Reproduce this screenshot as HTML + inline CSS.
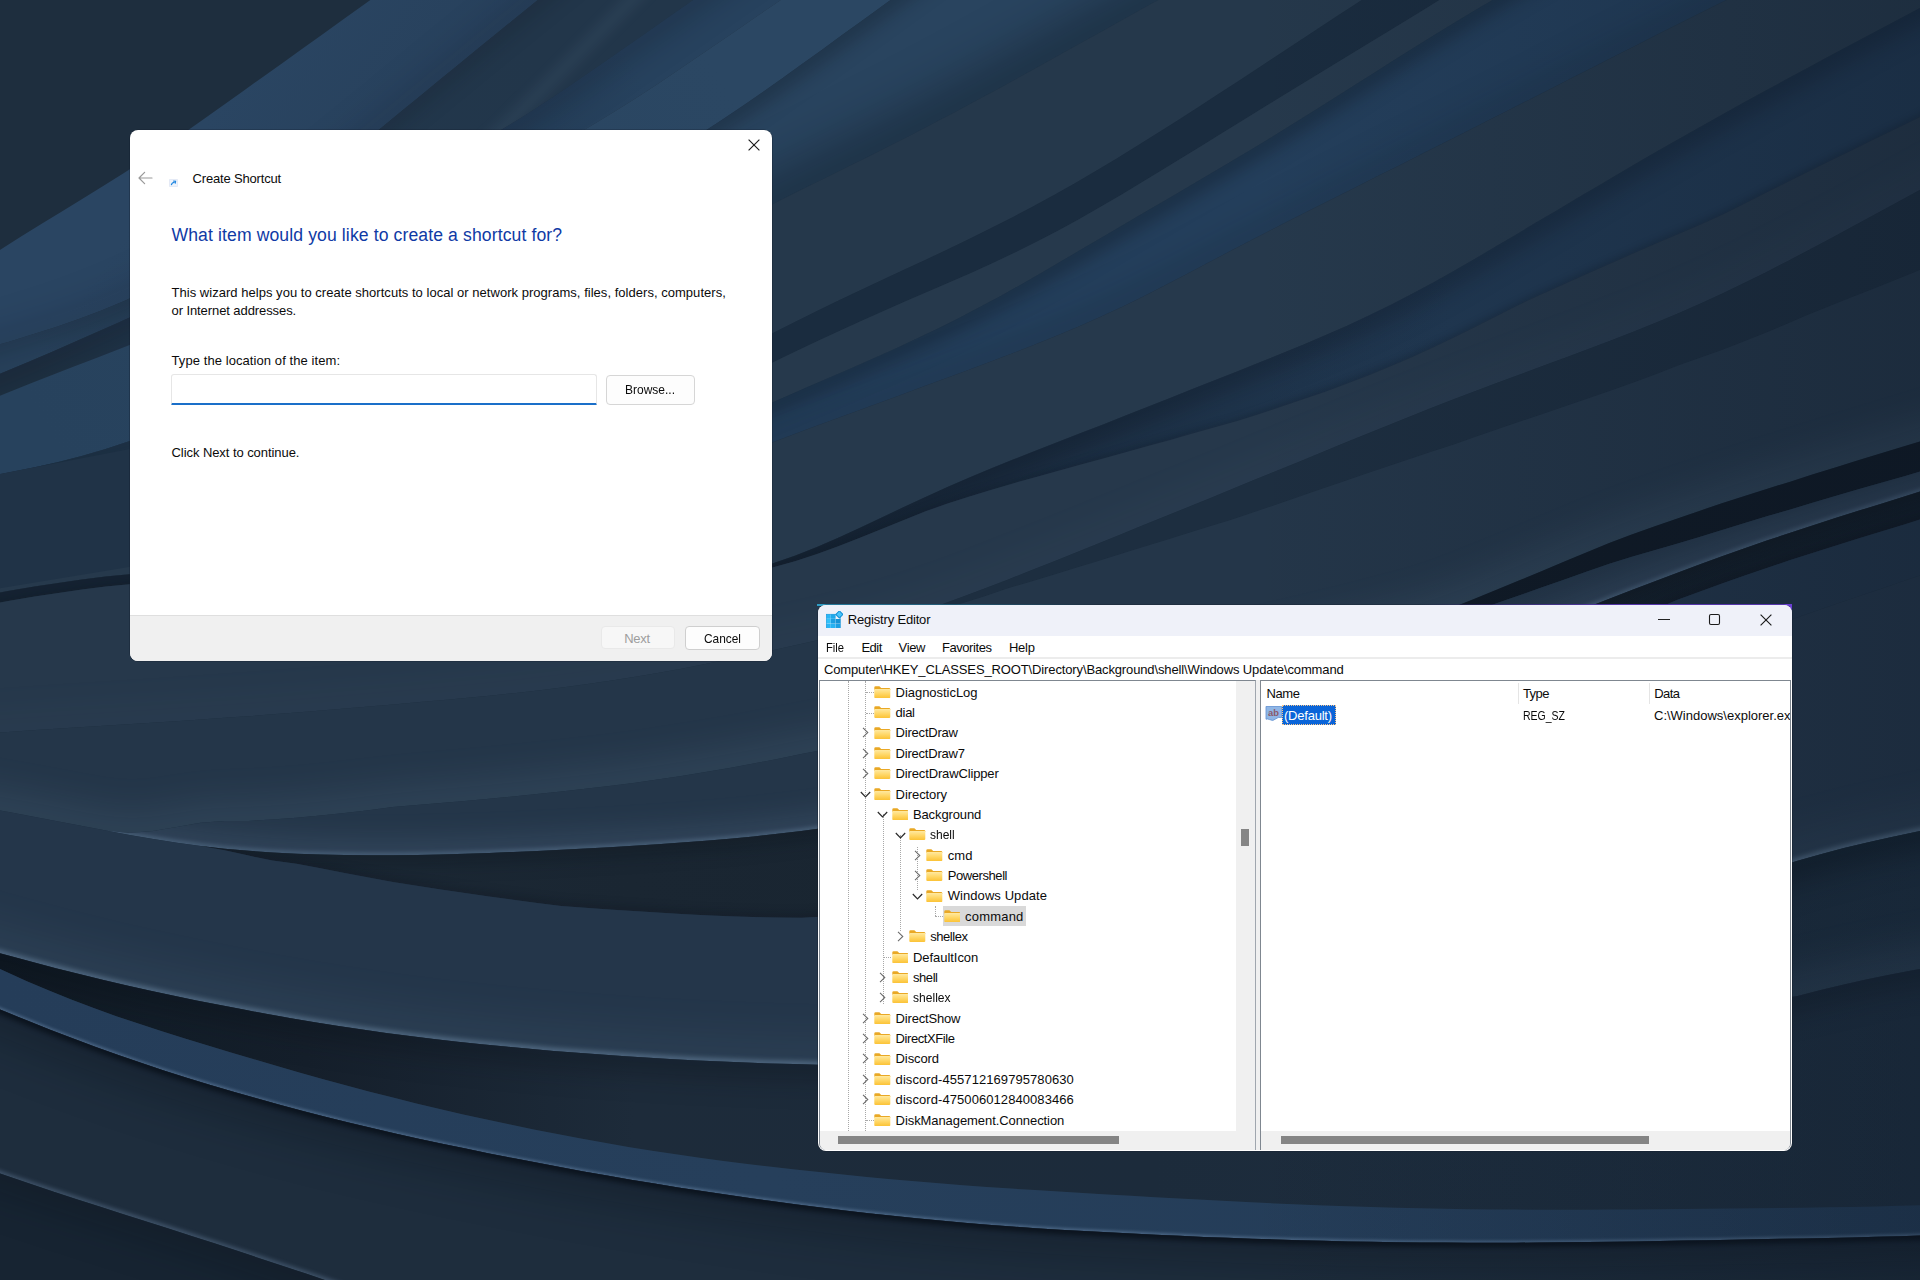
<!DOCTYPE html>
<html lang="en"><head><meta charset="utf-8"><title>Create Shortcut / Registry Editor</title>
<style>
html,body{margin:0;padding:0}
body{width:1920px;height:1280px;overflow:hidden;position:relative;background:#22354a;font-family:"Liberation Sans",sans-serif}
.b{position:absolute;display:block}
.t{position:absolute;white-space:pre;line-height:20px;font-family:"Liberation Sans",sans-serif}
</style></head><body>
<svg class="b" style="left:0;top:0" width="1920" height="1280" viewBox="0 0 1920 1280"><defs><linearGradient id="g_A" gradientUnits="userSpaceOnUse" x1="150" y1="200" x2="330" y2="330"><stop offset="0" stop-color="#2a4562"/><stop offset="1" stop-color="#27405b"/></linearGradient><path id="b_A" d="M-60.0 290.0L-40.0 276.4L-19.9 263.0L0.3 249.7L20.7 236.8L41.3 224.0L61.9 211.4L82.6 198.8L103.2 186.1L123.6 173.2L143.9 160.1L164.1 146.7L184.0 133.0L203.9 119.1L223.6 105.1L243.3 91.0L262.9 76.9L282.6 62.9L302.3 48.8L322.0 34.7L341.7 20.6L361.3 6.5L381.0 -7.6L400.7 -21.8L420.3 -35.9L440.0 -50.0 L600.0 -50.0 L590.5 -42.4L571.6 -27.3L552.7 -12.1L533.8 3.2L515.0 18.5L496.2 33.8L477.4 49.1L458.6 64.5L439.8 79.8L421.1 95.2L402.3 110.6L383.5 126.0L364.7 141.3L345.9 156.5L327.0 171.7L307.9 186.7L288.6 201.4L269.1 215.7L249.4 229.7L229.3 243.2L208.9 256.2L188.2 268.6L167.1 280.2L145.5 291.1L123.6 301.2L101.4 310.5L78.8 319.0L56.0 326.9L32.9 334.3L9.8 341.4L-13.5 348.3L-36.7 355.2L-60.0 362.0 Z"/><clipPath id="cp_A"><use href="#b_A"/></clipPath><linearGradient id="g_B" gradientUnits="userSpaceOnUse" x1="40" y1="350" x2="520" y2="40"><stop offset="0" stop-color="#27405a"/><stop offset="0.35" stop-color="#22384e"/><stop offset="1" stop-color="#22364a"/></linearGradient><path id="b_B" d="M-60.0 362.0L-36.7 355.2L-13.5 348.3L9.8 341.4L32.9 334.3L56.0 326.9L78.8 319.0L101.4 310.5L123.6 301.2L145.5 291.1L167.1 280.2L188.2 268.6L208.9 256.2L229.3 243.2L249.4 229.7L269.1 215.7L288.6 201.4L307.9 186.7L327.0 171.7L345.9 156.5L364.7 141.3L383.5 126.0L402.3 110.6L421.1 95.2L439.8 79.8L458.6 64.5L477.4 49.1L496.2 33.8L515.0 18.5L533.8 3.2L552.7 -12.1L571.6 -27.3L590.5 -42.4L600.0 -50.0 L765.0 -50.0 L745.2 -36.2L725.3 -22.4L705.5 -8.6L685.7 5.2L665.9 19.0L646.1 32.9L626.3 46.7L606.5 60.6L586.6 74.3L566.7 87.9L546.7 101.3L526.4 114.4L506.0 127.1L485.3 139.5L464.4 151.5L443.3 163.2L422.0 174.7L400.7 186.0L379.3 197.1L357.8 208.2L336.3 219.2L314.7 230.0L293.0 240.7L271.3 251.4L249.6 261.9L227.7 272.2L205.9 282.5L183.9 292.7L162.0 302.8L140.0 312.8L118.0 322.7L95.9 332.6L73.8 342.3L51.7 352.0L29.4 361.5L7.2 370.8L-15.2 380.0L-37.6 389.0L-60.0 398.0 Z"/><clipPath id="cp_B"><use href="#b_B"/></clipPath><linearGradient id="g_C" gradientUnits="userSpaceOnUse" x1="40" y1="380" x2="620" y2="40"><stop offset="0" stop-color="#1f3143"/><stop offset="0.35" stop-color="#1f354d"/><stop offset="1" stop-color="#27425e"/></linearGradient><path id="b_C" d="M-60.0 398.0L-37.6 389.0L-15.2 380.0L7.2 370.8L29.4 361.5L51.7 352.0L73.8 342.3L95.9 332.6L118.0 322.7L140.0 312.8L162.0 302.8L183.9 292.7L205.9 282.5L227.7 272.2L249.6 261.9L271.3 251.4L293.0 240.7L314.7 230.0L336.3 219.2L357.8 208.2L379.3 197.1L400.7 186.0L422.0 174.7L443.3 163.2L464.4 151.5L485.3 139.5L506.0 127.1L526.4 114.4L546.7 101.3L566.7 87.9L586.6 74.3L606.5 60.6L626.3 46.7L646.1 32.9L665.9 19.0L685.7 5.2L705.5 -8.6L725.3 -22.4L745.2 -36.2L765.0 -50.0 L855.0 -50.0 L835.0 -36.6L815.1 -23.2L795.2 -9.8L775.3 3.7L755.5 17.3L735.7 30.9L715.9 44.5L696.0 58.0L676.2 71.5L656.2 84.9L636.2 98.0L615.9 110.8L595.4 123.3L574.8 135.6L554.0 147.5L533.0 159.2L511.9 170.8L490.8 182.2L469.6 193.5L448.3 204.6L427.0 215.7L405.6 226.6L384.2 237.4L362.6 248.0L340.9 258.3L319.1 268.4L297.2 278.1L275.1 287.6L253.0 296.9L230.7 305.9L208.4 314.7L186.0 323.4L163.6 332.0L141.1 340.6L118.7 349.2L96.3 357.9L73.9 366.6L51.5 375.3L29.1 384.1L6.8 393.0L-15.5 401.9L-37.7 410.9L-60.0 420.0 Z"/><clipPath id="cp_C"><use href="#b_C"/></clipPath><linearGradient id="g_Dp" gradientUnits="userSpaceOnUse" x1="40" y1="420" x2="700" y2="40"><stop offset="0" stop-color="#27425d"/><stop offset="1" stop-color="#2b4763"/></linearGradient><path id="b_Dp" d="M-60.0 420.0L-37.7 410.9L-15.5 401.9L6.8 393.0L29.1 384.1L51.5 375.3L73.9 366.6L96.3 357.9L118.7 349.2L141.1 340.6L163.6 332.0L186.0 323.4L208.4 314.7L230.7 305.9L253.0 296.9L275.1 287.6L297.2 278.1L319.1 268.4L340.9 258.3L362.6 248.0L384.2 237.4L405.6 226.6L427.0 215.7L448.3 204.6L469.6 193.5L490.8 182.2L511.9 170.8L533.0 159.2L554.0 147.5L574.8 135.6L595.4 123.3L615.9 110.8L636.2 98.0L656.2 84.9L676.2 71.5L696.0 58.0L715.9 44.5L735.7 30.9L755.5 17.3L775.3 3.7L795.2 -9.8L815.1 -23.2L835.0 -36.6L855.0 -50.0 L960.0 -50.0 L940.3 -35.9L920.6 -21.7L901.0 -7.5L881.3 6.7L861.7 20.9L842.1 35.1L822.5 49.4L802.8 63.6L783.1 77.7L763.3 91.7L743.4 105.5L723.3 119.0L703.1 132.3L682.6 145.2L662.0 158.0L641.3 170.5L620.4 182.9L599.5 195.2L578.6 207.4L557.6 219.5L536.6 231.6L515.6 243.7L494.6 255.8L473.5 267.7L452.4 279.6L431.2 291.4L410.0 303.2L388.7 314.8L367.4 326.3L346.0 337.8L324.6 349.1L303.2 360.4L281.7 371.6L260.1 382.6L238.4 393.5L216.7 404.1L194.7 414.3L172.6 424.1L150.3 433.2L127.7 441.7L104.9 449.2L81.8 455.9L58.4 461.9L34.9 467.2L11.3 472.1L-12.5 476.8L-36.2 481.4L-60.0 486.0 Z"/><path id="b_ea" d="M-60.0 486.0L-36.2 481.4L-12.5 476.8L11.3 472.1L34.9 467.2L58.4 461.9L81.8 455.9L104.9 449.2L127.7 441.7L150.3 433.2L172.6 424.1L194.7 414.3L216.7 404.1L238.4 393.5L260.1 382.6L281.7 371.6L303.2 360.4L324.6 349.1L346.0 337.8L367.4 326.3L388.7 314.8L410.0 303.2L431.2 291.4L452.4 279.6L473.5 267.7L494.6 255.8L515.6 243.7L536.6 231.6L557.6 219.5L578.6 207.4L599.5 195.2L620.4 182.9L641.3 170.5L662.0 158.0L682.6 145.2L703.1 132.3L723.3 119.0L743.4 105.5L763.3 91.7L783.1 77.7L802.8 63.6L822.5 49.4L842.1 35.1L861.7 20.9L881.3 6.7L901.0 -7.5L920.6 -21.7L940.3 -35.9L960.0 -50.0 L1250.0 -50.0 L1228.9 -38.6L1207.7 -27.1L1186.6 -15.7L1165.6 -4.1L1144.5 7.5L1123.5 19.2L1102.6 30.9L1081.6 42.6L1060.6 54.3L1039.6 66.0L1018.6 77.6L997.5 89.2L976.4 100.6L955.2 111.9L934.0 123.1L912.6 134.2L891.2 145.1L869.8 155.9L848.2 166.5L826.7 177.2L805.2 187.8L783.7 198.6L762.4 209.6L741.1 220.7L720.0 232.1L698.9 243.7L678.0 255.5L657.3 267.6L636.7 279.9L616.3 292.6L596.2 305.6L576.2 318.8L556.3 332.1L536.4 345.4L516.3 358.4L496.0 370.9L475.2 382.5L454.0 393.2L432.3 402.7L410.1 411.2L387.5 418.7L364.5 425.2L341.3 431.1L317.9 436.3L294.4 441.1L270.9 445.6L247.2 449.8L223.6 454.0L199.9 458.1L176.2 462.2L152.6 466.4L128.9 470.7L105.3 475.0L81.7 479.4L58.1 483.8L34.5 488.3L10.9 492.7L-12.8 497.2L-36.4 501.6L-60.0 506.0 Z"/><clipPath id="cp_ea"><use href="#b_ea"/></clipPath><path id="b_L1" d="M-60.0 506.0L-36.4 501.6L-12.8 497.2L10.9 492.7L34.5 488.3L58.1 483.8L81.7 479.4L105.3 475.0L128.9 470.7L152.6 466.4L176.2 462.2L199.9 458.1L223.6 454.0L247.2 449.8L270.9 445.6L294.4 441.1L317.9 436.3L341.3 431.1L364.5 425.2L387.5 418.7L410.1 411.2L432.3 402.7L454.0 393.2L475.2 382.5L496.0 370.9L516.3 358.4L536.4 345.4L556.3 332.1L576.2 318.8L596.2 305.6L616.3 292.6L636.7 279.9L657.3 267.6L678.0 255.5L698.9 243.7L720.0 232.1L741.1 220.7L762.4 209.6L783.7 198.6L805.2 187.8L826.7 177.2L848.2 166.5L869.8 155.9L891.2 145.1L912.6 134.2L934.0 123.1L955.2 111.9L976.4 100.6L997.5 89.2L1018.6 77.6L1039.6 66.0L1060.6 54.3L1081.6 42.6L1102.6 30.9L1123.5 19.2L1144.5 7.5L1165.6 -4.1L1186.6 -15.7L1207.7 -27.1L1228.9 -38.6L1250.0 -50.0 L1440.0 -50.0 L1419.7 -37.1L1399.4 -24.2L1379.1 -11.2L1358.9 1.9L1338.8 15.0L1318.7 28.2L1298.6 41.5L1278.5 54.7L1258.4 68.0L1238.3 81.2L1218.1 94.3L1197.9 107.4L1177.7 120.4L1157.4 133.3L1137.0 146.1L1116.5 158.7L1095.9 171.1L1075.1 183.2L1054.2 195.0L1033.1 206.5L1011.8 217.7L990.4 228.6L968.8 239.3L947.1 249.7L925.4 260.0L903.6 270.1L881.7 280.3L859.9 290.4L838.2 300.7L816.6 311.2L795.0 321.9L773.6 332.7L752.2 343.7L730.8 354.8L709.5 365.8L688.0 376.7L666.5 387.4L644.8 397.7L622.9 407.7L600.9 417.2L578.6 426.1L556.1 434.5L533.4 442.2L510.5 449.1L487.4 455.2L464.0 460.4L440.5 464.9L416.8 468.5L393.0 471.5L369.1 473.9L345.2 475.9L321.2 477.5L297.2 478.8L273.2 480.0L249.1 481.1L225.1 482.3L201.1 483.7L177.1 485.3L153.2 487.3L129.3 489.8L105.5 492.7L81.7 496.2L58.0 500.1L34.4 504.4L10.8 509.0L-12.8 513.6L-36.4 518.3L-60.0 523.0 Z"/><path id="b_L2" d="M-60.0 523.0L-36.4 518.3L-12.8 513.6L10.8 509.0L34.4 504.4L58.0 500.1L81.7 496.2L105.5 492.7L129.3 489.8L153.2 487.3L177.1 485.3L201.1 483.7L225.1 482.3L249.1 481.1L273.2 480.0L297.2 478.8L321.2 477.5L345.2 475.9L369.1 473.9L393.0 471.5L416.8 468.5L440.5 464.9L464.0 460.4L487.4 455.2L510.5 449.1L533.4 442.2L556.1 434.5L578.6 426.1L600.9 417.2L622.9 407.7L644.8 397.7L666.5 387.4L688.0 376.7L709.5 365.8L730.8 354.8L752.2 343.7L773.6 332.7L795.0 321.9L816.6 311.2L838.2 300.7L859.9 290.4L881.7 280.3L903.6 270.1L925.4 260.0L947.1 249.7L968.8 239.3L990.4 228.6L1011.8 217.7L1033.1 206.5L1054.2 195.0L1075.1 183.2L1095.9 171.1L1116.5 158.7L1137.0 146.1L1157.4 133.3L1177.7 120.4L1197.9 107.4L1218.1 94.3L1238.3 81.2L1258.4 68.0L1278.5 54.7L1298.6 41.5L1318.7 28.2L1338.8 15.0L1358.9 1.9L1379.1 -11.2L1399.4 -24.2L1419.7 -37.1L1440.0 -50.0 L1520.0 -50.0 L1509.8 -43.6L1489.4 -31.0L1469.0 -18.3L1448.6 -5.7L1428.1 6.9L1407.7 19.5L1387.2 32.0L1366.6 44.5L1346.1 57.0L1325.6 69.5L1305.1 82.0L1284.6 94.5L1264.2 107.1L1243.7 119.7L1223.3 132.3L1202.9 144.9L1182.4 157.6L1162.0 170.1L1141.4 182.6L1120.8 194.9L1100.1 207.0L1079.3 218.9L1058.2 230.4L1037.0 241.5L1015.5 252.2L993.8 262.4L972.0 272.4L950.1 282.1L928.1 291.6L906.0 301.1L884.0 310.7L862.1 320.5L840.2 330.4L818.5 340.5L796.8 350.8L775.1 361.2L753.5 371.8L732.0 382.3L710.4 392.9L688.8 403.3L667.1 413.5L645.2 423.4L623.2 432.9L601.0 441.9L578.6 450.3L556.0 458.0L533.1 465.1L510.1 471.4L486.8 476.9L463.4 481.5L439.8 485.4L416.1 488.6L392.3 491.1L368.4 493.1L344.5 494.6L320.5 495.8L296.5 496.8L272.5 497.7L248.5 498.5L224.5 499.5L200.6 500.6L176.6 501.9L152.7 503.7L128.9 506.0L105.1 508.9L81.4 512.2L57.7 516.1L34.2 520.4L10.6 524.9L-12.9 529.6L-36.5 534.3L-60.0 539.0 Z"/><path id="b_L3" d="M-60.0 539.0L-36.5 534.3L-12.9 529.6L10.6 524.9L34.2 520.4L57.7 516.1L81.4 512.2L105.1 508.9L128.9 506.0L152.7 503.7L176.6 501.9L200.6 500.6L224.5 499.5L248.5 498.5L272.5 497.7L296.5 496.8L320.5 495.8L344.5 494.6L368.4 493.1L392.3 491.1L416.1 488.6L439.8 485.4L463.4 481.5L486.8 476.9L510.1 471.4L533.1 465.1L556.0 458.0L578.6 450.3L601.0 441.9L623.2 432.9L645.2 423.4L667.1 413.5L688.8 403.3L710.4 392.9L732.0 382.3L753.5 371.8L775.1 361.2L796.8 350.8L818.5 340.5L840.2 330.4L862.1 320.5L884.0 310.7L906.0 301.1L928.1 291.6L950.1 282.1L972.0 272.4L993.8 262.4L1015.5 252.2L1037.0 241.5L1058.2 230.4L1079.3 218.9L1100.1 207.0L1120.8 194.9L1141.4 182.6L1162.0 170.1L1182.4 157.6L1202.9 144.9L1223.3 132.3L1243.7 119.7L1264.2 107.1L1284.6 94.5L1305.1 82.0L1325.6 69.5L1346.1 57.0L1366.6 44.5L1387.2 32.0L1407.7 19.5L1428.1 6.9L1448.6 -5.7L1469.0 -18.3L1489.4 -31.0L1509.8 -43.6L1520.0 -50.0 L1580.0 -50.0 L1559.1 -38.1L1538.2 -26.2L1517.3 -14.2L1496.4 -2.1L1475.7 10.1L1455.0 22.5L1434.5 35.0L1414.0 47.7L1393.6 60.5L1373.3 73.4L1353.0 86.3L1332.6 99.2L1312.3 112.0L1291.8 124.8L1271.3 137.4L1250.7 149.9L1230.0 162.2L1209.3 174.5L1188.6 186.7L1167.8 198.9L1147.0 211.0L1126.2 223.2L1105.4 235.4L1084.7 247.6L1063.9 259.8L1043.1 271.9L1022.3 283.9L1001.3 295.7L980.1 307.1L958.8 318.2L937.2 328.9L915.5 339.3L893.7 349.4L871.7 359.2L849.7 368.9L827.6 378.5L805.5 388.1L783.4 397.7L761.3 407.2L739.2 416.9L717.2 426.4L695.0 435.8L672.8 445.1L650.4 453.9L627.9 462.3L605.3 470.2L582.4 477.5L559.3 484.1L536.1 490.0L512.6 495.1L489.1 499.5L465.4 503.2L441.5 506.3L417.6 508.7L393.7 510.7L369.7 512.2L345.6 513.3L321.6 514.2L297.5 515.0L273.5 515.6L249.4 516.3L225.3 517.0L201.3 518.0L177.3 519.2L153.3 520.9L129.4 523.1L105.5 525.8L81.8 529.2L58.1 533.0L34.4 537.3L10.8 541.8L-12.8 546.5L-36.4 551.3L-60.0 556.0 Z"/><path id="b_L4" d="M-60.0 556.0L-36.4 551.3L-12.8 546.5L10.8 541.8L34.4 537.3L58.1 533.0L81.8 529.2L105.5 525.8L129.4 523.1L153.3 520.9L177.3 519.2L201.3 518.0L225.3 517.0L249.4 516.3L273.5 515.6L297.5 515.0L321.6 514.2L345.6 513.3L369.7 512.2L393.7 510.7L417.6 508.7L441.5 506.3L465.4 503.2L489.1 499.5L512.6 495.1L536.1 490.0L559.3 484.1L582.4 477.5L605.3 470.2L627.9 462.3L650.4 453.9L672.8 445.1L695.0 435.8L717.2 426.4L739.2 416.9L761.3 407.2L783.4 397.7L805.5 388.1L827.6 378.5L849.7 368.9L871.7 359.2L893.7 349.4L915.5 339.3L937.2 328.9L958.8 318.2L980.1 307.1L1001.3 295.7L1022.3 283.9L1043.1 271.9L1063.9 259.8L1084.7 247.6L1105.4 235.4L1126.2 223.2L1147.0 211.0L1167.8 198.9L1188.6 186.7L1209.3 174.5L1230.0 162.2L1250.7 149.9L1271.3 137.4L1291.8 124.8L1312.3 112.0L1332.6 99.2L1353.0 86.3L1373.3 73.4L1393.6 60.5L1414.0 47.7L1434.5 35.0L1455.0 22.5L1475.7 10.1L1496.4 -2.1L1517.3 -14.2L1538.2 -26.2L1559.1 -38.1L1580.0 -50.0 L1830.0 -50.0 L1808.3 -39.6L1786.7 -29.2L1765.0 -18.8L1743.4 -8.3L1721.9 2.3L1700.4 13.0L1678.9 23.8L1657.4 34.6L1636.0 45.4L1614.6 56.3L1593.2 67.2L1571.8 78.1L1550.4 89.0L1528.9 99.9L1507.5 110.7L1486.1 121.6L1464.7 132.4L1443.2 143.3L1421.8 154.1L1400.3 164.9L1378.8 175.6L1357.3 186.4L1335.9 197.2L1314.4 208.0L1293.0 218.8L1271.6 229.7L1250.2 240.7L1229.0 251.8L1207.7 263.0L1186.5 274.2L1165.2 285.3L1143.9 296.2L1122.4 306.7L1100.7 316.8L1078.8 326.5L1056.7 335.8L1034.4 344.8L1012.0 353.5L989.6 362.1L967.1 370.5L944.6 378.8L922.0 387.1L899.5 395.4L876.9 403.7L854.4 412.0L831.8 420.3L809.3 428.6L786.8 437.0L764.3 445.4L741.8 453.8L719.3 462.2L696.8 470.5L674.2 478.6L651.5 486.3L628.6 493.5L605.6 500.1L582.5 506.0L559.1 511.3L535.6 515.8L512.0 519.6L488.2 522.8L464.4 525.4L440.5 527.5L416.6 529.2L392.6 530.5L368.6 531.4L344.6 532.2L320.6 532.7L296.6 533.2L272.6 533.6L248.6 534.1L224.6 534.6L200.6 535.4L176.6 536.6L152.7 538.1L128.9 540.2L105.1 542.9L81.4 546.2L57.7 550.0L34.1 554.3L10.6 558.8L-12.9 563.5L-36.5 568.2L-60.0 573.0 Z"/><clipPath id="cp_L4"><use href="#b_L4"/></clipPath><path id="b_L5" d="M-60.0 573.0L-36.5 568.2L-12.9 563.5L10.6 558.8L34.1 554.3L57.7 550.0L81.4 546.2L105.1 542.9L128.9 540.2L152.7 538.1L176.6 536.6L200.6 535.4L224.6 534.6L248.6 534.1L272.6 533.6L296.6 533.2L320.6 532.7L344.6 532.2L368.6 531.4L392.6 530.5L416.6 529.2L440.5 527.5L464.4 525.4L488.2 522.8L512.0 519.6L535.6 515.8L559.1 511.3L582.5 506.0L605.6 500.1L628.6 493.5L651.5 486.3L674.2 478.6L696.8 470.5L719.3 462.2L741.8 453.8L764.3 445.4L786.8 437.0L809.3 428.6L831.8 420.3L854.4 412.0L876.9 403.7L899.5 395.4L922.0 387.1L944.6 378.8L967.1 370.5L989.6 362.1L1012.0 353.5L1034.4 344.8L1056.7 335.8L1078.8 326.5L1100.7 316.8L1122.4 306.7L1143.9 296.2L1165.2 285.3L1186.5 274.2L1207.7 263.0L1229.0 251.8L1250.2 240.7L1271.6 229.7L1293.0 218.8L1314.4 208.0L1335.9 197.2L1357.3 186.4L1378.8 175.6L1400.3 164.9L1421.8 154.1L1443.2 143.3L1464.7 132.4L1486.1 121.6L1507.5 110.7L1528.9 99.9L1550.4 89.0L1571.8 78.1L1593.2 67.2L1614.6 56.3L1636.0 45.4L1657.4 34.6L1678.9 23.8L1700.4 13.0L1721.9 2.3L1743.4 -8.3L1765.0 -18.8L1786.7 -29.2L1808.3 -39.6L1830.0 -50.0 L2020.0 -45.0 L1998.8 -33.8L1977.6 -22.5L1956.4 -11.3L1935.2 -0.1L1914.0 11.2L1892.8 22.5L1871.6 33.7L1850.4 45.0L1829.2 56.3L1808.1 67.7L1787.0 79.1L1765.9 90.5L1744.8 102.1L1723.8 113.7L1702.9 125.4L1682.0 137.2L1661.2 149.1L1640.4 161.1L1619.6 173.2L1599.0 185.4L1578.3 197.6L1557.7 209.9L1537.0 222.1L1516.4 234.4L1495.8 246.6L1475.1 258.8L1454.3 270.7L1433.4 282.4L1412.3 293.8L1391.1 304.8L1369.5 315.3L1347.8 325.4L1325.9 335.0L1303.8 344.4L1281.7 353.5L1259.4 362.5L1237.1 371.4L1214.8 380.3L1192.5 389.1L1170.2 398.0L1147.9 406.8L1125.6 415.6L1103.2 424.4L1080.9 433.1L1058.5 441.8L1036.1 450.5L1013.8 459.3L991.6 468.3L969.5 477.5L947.5 487.1L925.6 496.9L903.9 507.0L882.3 517.3L860.6 527.6L838.9 537.5L817.0 547.0L794.9 555.7L772.4 563.4L749.6 570.0L726.5 575.5L703.1 579.8L679.6 583.2L655.8 585.8L632.0 587.6L608.1 588.8L584.1 589.6L560.2 589.9L536.2 589.7L512.2 589.2L488.3 588.4L464.3 587.1L440.4 585.5L416.5 583.6L392.6 581.6L368.7 579.4L344.8 577.3L320.9 575.4L297.0 573.7L273.1 572.4L249.1 571.5L225.2 571.0L201.2 571.0L177.3 571.5L153.4 572.6L129.5 574.3L105.7 576.6L81.9 579.5L58.2 582.9L34.5 586.6L10.9 590.6L-12.7 594.7L-36.4 598.8L-60.0 603.0 Z"/><linearGradient id="g_L6" gradientUnits="userSpaceOnUse" x1="772" y1="0" x2="1450" y2="0"><stop offset="0" stop-color="#1a2a3b"/><stop offset="0.35" stop-color="#1b2d41"/><stop offset="1" stop-color="#213953"/></linearGradient><path id="b_L6" d="M-60.0 603.0L-36.4 598.8L-12.7 594.7L10.9 590.6L34.5 586.6L58.2 582.9L81.9 579.5L105.7 576.6L129.5 574.3L153.4 572.6L177.3 571.5L201.2 571.0L225.2 571.0L249.1 571.5L273.1 572.4L297.0 573.7L320.9 575.4L344.8 577.3L368.7 579.4L392.6 581.6L416.5 583.6L440.4 585.5L464.3 587.1L488.3 588.4L512.2 589.2L536.2 589.7L560.2 589.9L584.1 589.6L608.1 588.8L632.0 587.6L655.8 585.8L679.6 583.2L703.1 579.8L726.5 575.5L749.6 570.0L772.4 563.4L794.9 555.7L817.0 547.0L838.9 537.5L860.6 527.6L882.3 517.3L903.9 507.0L925.6 496.9L947.5 487.1L969.5 477.5L991.6 468.3L1013.8 459.3L1036.1 450.5L1058.5 441.8L1080.9 433.1L1103.2 424.4L1125.6 415.6L1147.9 406.8L1170.2 398.0L1192.5 389.1L1214.8 380.3L1237.1 371.4L1259.4 362.5L1281.7 353.5L1303.8 344.4L1325.9 335.0L1347.8 325.4L1369.5 315.3L1391.1 304.8L1412.3 293.8L1433.4 282.4L1454.3 270.7L1475.1 258.8L1495.8 246.6L1516.4 234.4L1537.0 222.1L1557.7 209.9L1578.3 197.6L1599.0 185.4L1619.6 173.2L1640.4 161.1L1661.2 149.1L1682.0 137.2L1702.9 125.4L1723.8 113.7L1744.8 102.1L1765.9 90.5L1787.0 79.1L1808.1 67.7L1829.2 56.3L1850.4 45.0L1871.6 33.7L1892.8 22.5L1914.0 11.2L1935.2 -0.1L1956.4 -11.3L1977.6 -22.5L1998.8 -33.8L2020.0 -45.0 L2060 -120 L2020.0 67.0 L1998.8 77.6L1977.6 88.2L1956.4 98.8L1935.2 109.4L1914.0 119.9L1892.8 130.3L1871.6 140.6L1850.4 151.0L1829.2 161.3L1808.1 171.8L1787.0 182.2L1765.9 192.8L1744.8 203.4L1723.8 214.1L1702.9 223.6L1682.0 232.4L1661.2 241.3L1640.4 250.3L1619.6 259.4L1599.0 268.5L1578.3 277.8L1557.7 287.0L1537.0 296.3L1516.4 305.9L1495.8 316.5L1475.1 326.9L1454.3 337.2L1433.4 347.2L1412.3 356.9L1391.1 366.1L1369.5 374.9L1347.8 383.3L1325.9 391.4L1303.8 399.1L1281.7 406.6L1259.4 413.9L1237.1 421.1L1214.8 427.3L1192.5 433.6L1170.2 439.9L1147.9 446.1L1125.6 452.3L1103.2 458.5L1080.9 464.6L1058.5 470.8L1036.1 477.0L1013.8 483.2L991.6 489.7L969.5 496.4L947.5 503.5L925.6 511.3L903.9 519.9L882.3 528.8L860.6 537.6L838.9 546.1L817.0 554.0L794.9 561.2L772.4 567.4L749.6 574.6L726.5 580.7L703.1 585.7L679.6 589.5L655.8 592.5L632.0 594.7L608.1 596.3L584.1 597.4L560.2 598.1L536.2 598.4L512.2 598.2L488.3 597.7L464.3 596.9L440.4 595.5L416.5 593.6L392.6 591.6L368.7 589.4L344.8 587.3L320.9 585.4L297.0 583.7L273.1 582.4L249.1 581.5L225.2 581.0L201.2 581.0L177.3 581.5L153.4 582.6L129.5 584.3L105.7 586.6L81.9 589.5L58.2 592.9L34.5 596.6L10.9 600.6L-12.7 604.7L-36.4 608.8L-60.0 613.0 Z"/><clipPath id="cp_L6"><use href="#b_L6"/></clipPath><path id="b_L7" d="M-60.0 613.0L-36.4 608.8L-12.7 604.7L10.9 600.6L34.5 596.6L58.2 592.9L81.9 589.5L105.7 586.6L129.5 584.3L153.4 582.6L177.3 581.5L201.2 581.0L225.2 581.0L249.1 581.5L273.1 582.4L297.0 583.7L320.9 585.4L344.8 587.3L368.7 589.4L392.6 591.6L416.5 593.6L440.4 595.5L464.3 596.9L488.3 597.7L512.2 598.2L536.2 598.4L560.2 598.1L584.1 597.4L608.1 596.3L632.0 594.7L655.8 592.5L679.6 589.5L703.1 585.7L726.5 580.7L749.6 574.6L772.4 567.4L794.9 561.2L817.0 554.0L838.9 546.1L860.6 537.6L882.3 528.8L903.9 519.9L925.6 511.3L947.5 503.5L969.5 496.4L991.6 489.7L1013.8 483.2L1036.1 477.0L1058.5 470.8L1080.9 464.6L1103.2 458.5L1125.6 452.3L1147.9 446.1L1170.2 439.9L1192.5 433.6L1214.8 427.3L1237.1 421.1L1259.4 413.9L1281.7 406.6L1303.8 399.1L1325.9 391.4L1347.8 383.3L1369.5 374.9L1391.1 366.1L1412.3 356.9L1433.4 347.2L1454.3 337.2L1475.1 326.9L1495.8 316.5L1516.4 305.9L1537.0 296.3L1557.7 287.0L1578.3 277.8L1599.0 268.5L1619.6 259.4L1640.4 250.3L1661.2 241.3L1682.0 232.4L1702.9 223.6L1723.8 214.1L1744.8 203.4L1765.9 192.8L1787.0 182.2L1808.1 171.8L1829.2 161.3L1850.4 151.0L1871.6 140.6L1892.8 130.3L1914.0 119.9L1935.2 109.4L1956.4 98.8L1977.6 88.2L1998.8 77.6L2020.0 67.0 L2020.0 135.0 L1998.9 146.6L1977.8 158.2L1956.7 169.8L1935.6 181.4L1914.4 193.0L1893.3 204.5L1872.1 216.0L1850.9 227.5L1829.7 238.9L1808.5 250.2L1787.1 261.4L1765.7 272.4L1744.2 283.1L1722.5 293.6L1700.7 303.6L1678.6 313.3L1656.4 322.6L1634.1 331.6L1611.7 340.3L1589.2 348.8L1566.6 357.2L1544.0 365.5L1521.4 373.9L1498.8 382.2L1476.3 390.7L1453.8 399.3L1431.3 408.1L1408.9 416.9L1386.6 425.9L1364.2 434.9L1341.9 444.1L1319.7 453.2L1297.4 462.4L1275.1 471.5L1252.8 480.6L1230.5 489.8L1208.2 498.9L1185.9 508.0L1163.6 517.0L1141.3 526.1L1118.9 535.2L1096.6 544.2L1074.3 553.2L1051.9 562.2L1029.5 571.1L1007.1 579.9L984.7 588.6L962.1 597.0L939.5 605.2L916.8 612.9L893.9 620.1L870.8 626.8L847.6 633.0L824.3 638.7L800.9 644.1L777.4 649.2L753.9 654.2L730.3 659.1L706.7 663.8L683.1 668.4L659.4 672.7L635.7 676.8L611.9 680.6L588.1 684.1L564.2 687.3L540.3 690.2L516.4 692.9L492.4 695.4L468.5 697.7L444.5 700.0L420.5 702.1L396.5 704.2L372.5 706.3L348.5 708.3L324.5 710.3L300.5 712.2L276.5 714.1L252.4 715.9L228.4 717.6L204.4 719.3L180.3 720.9L156.3 722.5L132.3 724.0L108.2 725.5L84.2 727.0L60.1 728.5L36.1 730.1L12.1 731.7L-12.0 733.4L-36.0 735.2L-60.0 737.0 Z"/><clipPath id="cp_L7"><use href="#b_L7"/></clipPath><path id="b_M3" d="M-60.0 737.0L-36.0 735.2L-12.0 733.4L12.1 731.7L36.1 730.1L60.1 728.5L84.2 727.0L108.2 725.5L132.3 724.0L156.3 722.5L180.3 720.9L204.4 719.3L228.4 717.6L252.4 715.9L276.5 714.1L300.5 712.2L324.5 710.3L348.5 708.3L372.5 706.3L396.5 704.2L420.5 702.1L444.5 700.0L468.5 697.7L492.4 695.4L516.4 692.9L540.3 690.2L564.2 687.3L588.1 684.1L611.9 680.6L635.7 676.8L659.4 672.7L683.1 668.4L706.7 663.8L730.3 659.1L753.9 654.2L777.4 649.2L800.9 644.1L824.3 638.7L847.6 633.0L870.8 626.8L893.9 620.1L916.8 612.9L939.5 605.2L962.1 597.0L984.7 588.6L1007.1 579.9L1029.5 571.1L1051.9 562.2L1074.3 553.2L1096.6 544.2L1118.9 535.2L1141.3 526.1L1163.6 517.0L1185.9 508.0L1208.2 498.9L1230.5 489.8L1252.8 480.6L1275.1 471.5L1297.4 462.4L1319.7 453.2L1341.9 444.1L1364.2 434.9L1386.6 425.9L1408.9 416.9L1431.3 408.1L1453.8 399.3L1476.3 390.7L1498.8 382.2L1521.4 373.9L1544.0 365.5L1566.6 357.2L1589.2 348.8L1611.7 340.3L1634.1 331.6L1656.4 322.6L1678.6 313.3L1700.7 303.6L1722.5 293.6L1744.2 283.1L1765.7 272.4L1787.1 261.4L1808.5 250.2L1829.7 238.9L1850.9 227.5L1872.1 216.0L1893.3 204.5L1914.4 193.0L1935.6 181.4L1956.7 169.8L1977.8 158.2L1998.9 146.6L2020.0 135.0 L2020.0 223.0 L1998.9 232.9L1977.8 242.8L1956.7 252.8L1935.6 262.6L1914.4 272.2L1893.3 280.7L1872.1 289.2L1850.9 297.6L1829.7 306.0L1808.5 314.6L1787.1 323.7L1765.7 332.7L1744.2 341.3L1722.5 349.7L1700.7 357.6L1678.6 365.3L1656.4 373.9L1634.1 382.2L1611.7 390.2L1589.2 398.0L1566.6 405.7L1544.0 413.4L1521.4 421.0L1498.8 428.7L1476.3 436.5L1453.8 444.5L1431.3 451.8L1408.9 459.2L1386.6 466.7L1364.2 474.2L1341.9 481.9L1319.7 489.5L1297.4 497.2L1275.1 504.9L1252.8 512.5L1230.5 519.9L1208.2 526.8L1185.9 533.8L1163.6 540.7L1141.3 547.6L1118.9 554.5L1096.6 561.4L1074.3 568.3L1051.9 575.2L1029.5 581.9L1007.1 588.6L984.7 596.2L962.1 603.2L939.5 609.1L916.8 614.7L893.9 620.4L870.8 626.8L847.6 633.0L824.3 638.7L800.9 644.1L777.4 649.2L753.9 654.2L730.3 659.1L706.7 663.8L683.1 668.4L659.4 672.7L635.7 676.8L611.9 680.6L588.1 684.1L564.2 687.3L540.3 690.2L516.4 692.9L492.4 695.4L468.5 697.7L444.5 700.0L420.5 702.1L396.5 704.2L372.5 706.3L348.5 708.3L324.5 710.3L300.5 712.2L276.5 714.1L252.4 715.9L228.4 717.6L204.4 719.3L180.3 720.9L156.3 722.5L132.3 724.0L108.2 725.5L84.2 727.0L60.1 728.5L36.1 730.1L12.1 731.7L-12.0 733.4L-36.0 735.2L-60.0 737.0 Z"/><path id="b_M4" d="M-60.0 737.0L-36.0 735.2L-12.0 733.4L12.1 731.7L36.1 730.1L60.1 728.5L84.2 727.0L108.2 725.5L132.3 724.0L156.3 722.5L180.3 720.9L204.4 719.3L228.4 717.6L252.4 715.9L276.5 714.1L300.5 712.2L324.5 710.3L348.5 708.3L372.5 706.3L396.5 704.2L420.5 702.1L444.5 700.0L468.5 697.7L492.4 695.4L516.4 692.9L540.3 690.2L564.2 687.3L588.1 684.1L611.9 680.6L635.7 676.8L659.4 672.7L683.1 668.4L706.7 663.8L730.3 659.1L753.9 654.2L777.4 649.2L800.9 644.1L824.3 638.7L847.6 633.0L870.8 626.8L893.9 620.4L916.8 614.7L939.5 609.1L962.1 603.2L984.7 596.2L1007.1 588.6L1029.5 581.9L1051.9 575.2L1074.3 568.3L1096.6 561.4L1118.9 554.5L1141.3 547.6L1163.6 540.7L1185.9 533.8L1208.2 526.8L1230.5 519.9L1252.8 512.5L1275.1 504.9L1297.4 497.2L1319.7 489.5L1341.9 481.9L1364.2 474.2L1386.6 466.7L1408.9 459.2L1431.3 451.8L1453.8 444.5L1476.3 436.5L1498.8 428.7L1521.4 421.0L1544.0 413.4L1566.6 405.7L1589.2 398.0L1611.7 390.2L1634.1 382.2L1656.4 373.9L1678.6 365.3L1700.7 357.6L1722.5 349.7L1744.2 341.3L1765.7 332.7L1787.1 323.7L1808.5 314.6L1829.7 306.0L1850.9 297.6L1872.1 289.2L1893.3 280.7L1914.4 272.2L1935.6 262.6L1956.7 252.8L1977.8 242.8L1998.9 232.9L2020.0 223.0 L2020.0 410.0 L1997.0 417.3L1974.1 424.6L1951.1 431.8L1928.1 439.1L1905.1 446.1L1882.1 453.1L1859.1 460.1L1836.1 467.2L1813.2 474.3L1790.3 481.7L1767.5 488.7L1744.7 495.9L1722.0 503.3L1699.4 510.9L1676.8 518.7L1654.3 526.6L1631.8 534.6L1609.3 542.9L1586.9 552.2L1564.5 561.6L1542.1 570.9L1519.6 580.3L1497.2 589.6L1474.7 598.8L1452.2 607.8L1429.6 615.5L1407.0 621.5L1384.3 627.4L1361.6 633.2L1338.8 638.8L1316.0 644.3L1293.1 649.7L1270.2 655.0L1247.3 660.2L1224.3 665.2L1201.3 670.0L1178.2 674.7L1155.1 679.2L1131.9 683.4L1108.6 687.4L1085.3 692.9L1061.9 699.2L1038.5 705.2L1015.0 711.0L991.4 716.6L967.8 721.9L944.1 727.0L920.4 732.0L896.7 736.7L872.9 741.2L849.1 745.4L825.3 749.5L801.4 754.1L777.5 759.0L753.6 763.6L729.6 768.0L705.6 772.0L681.6 775.9L657.6 779.6L633.6 783.1L609.5 786.1L585.4 788.8L561.4 791.4L537.3 794.0L513.2 796.4L489.2 798.7L465.1 800.9L441.0 803.0L416.9 804.9L392.9 807.1L368.8 810.2L344.7 813.0L320.6 815.5L296.6 817.7L272.5 819.5L248.6 820.9L224.6 821.1L200.7 822.8L176.9 826.9L153.2 831.1L129.5 833.0L105.8 830.5L82.2 826.0L58.5 821.5L34.8 817.0L11.2 812.6L-12.5 808.4L-36.3 804.2L-60.0 800.0 Z"/><clipPath id="cp_M4"><use href="#b_M4"/></clipPath><path id="b_M5" d="M-60.0 800.0L-36.3 804.2L-12.5 808.4L11.2 812.6L34.8 817.0L58.5 821.5L82.2 826.0L105.8 830.5L129.5 833.0L153.2 831.1L176.9 826.9L200.7 822.8L224.6 821.1L248.6 820.9L272.5 819.5L296.6 817.7L320.6 815.5L344.7 813.0L368.8 810.2L392.9 807.1L416.9 804.9L441.0 803.0L465.1 800.9L489.2 798.7L513.2 796.4L537.3 794.0L561.4 791.4L585.4 788.8L609.5 786.1L633.6 783.1L657.6 779.6L681.6 775.9L705.6 772.0L729.6 768.0L753.6 763.6L777.5 759.0L801.4 754.1L825.3 749.5L849.1 745.4L872.9 741.2L896.7 736.7L920.4 732.0L944.1 727.0L967.8 721.9L991.4 716.6L1015.0 711.0L1038.5 705.2L1061.9 699.2L1085.3 692.9L1108.6 687.4L1131.9 683.4L1155.1 679.2L1178.2 674.7L1201.3 670.0L1224.3 665.2L1247.3 660.2L1270.2 655.0L1293.1 649.7L1316.0 644.3L1338.8 638.8L1361.6 633.2L1384.3 627.4L1407.0 621.5L1429.6 615.5L1452.2 607.8L1474.7 598.8L1497.2 589.6L1519.6 580.3L1542.1 570.9L1564.5 561.6L1586.9 552.2L1609.3 542.9L1631.8 534.6L1654.3 526.6L1676.8 518.7L1699.4 510.9L1722.0 503.3L1744.7 495.9L1767.5 488.7L1790.3 481.7L1813.2 474.3L1836.1 467.2L1859.1 460.1L1882.1 453.1L1905.1 446.1L1928.1 439.1L1951.1 431.8L1974.1 424.6L1997.0 417.3L2020.0 410.0 L2020.0 440.0 L1997.0 447.3L1974.1 454.6L1951.1 461.8L1928.1 469.1L1905.1 475.9L1882.1 482.4L1859.1 489.0L1836.1 495.7L1813.2 502.5L1790.3 509.4L1767.5 516.0L1744.7 522.9L1722.0 529.9L1699.4 537.1L1676.8 543.8L1654.3 550.3L1631.8 556.8L1609.3 563.7L1586.9 571.5L1564.5 579.4L1542.1 587.3L1519.6 595.2L1497.2 603.0L1474.7 611.5L1452.2 619.5L1429.6 625.4L1407.0 629.3L1384.3 632.9L1361.6 636.4L1338.8 640.2L1316.0 644.6L1293.1 649.7L1270.2 655.0L1247.3 660.2L1224.3 665.2L1201.3 670.0L1178.2 674.7L1155.1 679.2L1131.9 683.4L1108.6 687.4L1085.3 692.9L1061.9 699.2L1038.5 705.2L1015.0 711.0L991.4 716.6L967.8 721.9L944.1 727.0L920.4 732.0L896.7 736.7L872.9 741.2L849.1 745.4L825.3 749.5L801.4 754.1L777.5 759.0L753.6 763.6L729.6 768.0L705.6 772.0L681.6 775.9L657.6 779.6L633.6 783.1L609.5 786.1L585.4 788.8L561.4 791.4L537.3 794.0L513.2 796.4L489.2 798.7L465.1 800.9L441.0 803.0L416.9 804.9L392.9 807.1L368.8 810.2L344.7 813.0L320.6 815.5L296.6 817.7L272.5 819.5L248.6 820.9L224.6 821.1L200.7 822.8L176.9 826.9L153.2 831.1L129.5 833.0L105.8 830.5L82.2 826.0L58.5 821.5L34.8 817.0L11.2 812.6L-12.5 808.4L-36.3 804.2L-60.0 800.0 Z"/><path id="b_M6" d="M-60.0 800.0L-36.3 804.2L-12.5 808.4L11.2 812.6L34.8 817.0L58.5 821.5L82.2 826.0L105.8 830.5L129.5 833.0L153.2 831.1L176.9 826.9L200.7 822.8L224.6 821.1L248.6 820.9L272.5 819.5L296.6 817.7L320.6 815.5L344.7 813.0L368.8 810.2L392.9 807.1L416.9 804.9L441.0 803.0L465.1 800.9L489.2 798.7L513.2 796.4L537.3 794.0L561.4 791.4L585.4 788.8L609.5 786.1L633.6 783.1L657.6 779.6L681.6 775.9L705.6 772.0L729.6 768.0L753.6 763.6L777.5 759.0L801.4 754.1L825.3 749.5L849.1 745.4L872.9 741.2L896.7 736.7L920.4 732.0L944.1 727.0L967.8 721.9L991.4 716.6L1015.0 711.0L1038.5 705.2L1061.9 699.2L1085.3 692.9L1108.6 687.4L1131.9 683.4L1155.1 679.2L1178.2 674.7L1201.3 670.0L1224.3 665.2L1247.3 660.2L1270.2 655.0L1293.1 649.7L1316.0 644.6L1338.8 640.2L1361.6 636.4L1384.3 632.9L1407.0 629.3L1429.6 625.4L1452.2 619.5L1474.7 611.5L1497.2 603.0L1519.6 595.2L1542.1 587.3L1564.5 579.4L1586.9 571.5L1609.3 563.7L1631.8 556.8L1654.3 550.3L1676.8 543.8L1699.4 537.1L1722.0 529.9L1744.7 522.9L1767.5 516.0L1790.3 509.4L1813.2 502.5L1836.1 495.7L1859.1 489.0L1882.1 482.4L1905.1 475.9L1928.1 469.1L1951.1 461.8L1974.1 454.6L1997.0 447.3L2020.0 440.0 L2020.0 460.0 L1997.0 467.3L1974.1 474.6L1951.1 481.8L1928.1 489.1L1905.1 496.2L1882.1 503.4L1859.1 510.6L1836.1 517.8L1813.2 525.2L1790.3 532.7L1767.5 540.3L1744.7 548.2L1722.0 556.3L1699.4 564.5L1676.8 572.9L1654.3 581.5L1631.8 590.1L1609.3 598.8L1586.9 607.6L1564.5 616.4L1542.1 625.3L1519.6 634.1L1497.2 642.9L1474.7 651.6L1452.2 660.1L1429.6 668.5L1407.0 676.8L1384.3 684.8L1361.6 692.8L1338.8 700.6L1316.0 708.4L1293.1 716.0L1270.2 723.5L1247.3 730.9L1224.3 738.1L1201.3 745.2L1178.2 752.1L1155.1 758.8L1131.9 765.3L1108.6 771.5L1085.3 777.5L1061.9 783.2L1038.5 788.7L1015.0 793.9L991.4 798.9L967.8 803.6L944.1 808.2L920.4 812.5L896.7 816.6L872.9 820.5L849.1 824.2L825.3 827.7L801.4 830.9L777.5 833.7L753.6 836.4L729.6 838.7L705.6 840.8L681.6 842.6L657.6 844.3L633.6 845.8L609.5 847.2L585.4 848.5L561.4 849.8L537.3 850.9L513.2 851.9L489.2 852.9L465.1 853.7L441.0 854.4L416.9 854.9L392.9 855.2L368.8 855.2L344.7 855.0L320.6 854.5L296.6 853.7L272.5 852.5L248.6 850.8L224.6 848.7L200.7 846.0L176.9 842.7L153.2 839.0L129.5 834.9L105.8 830.5L82.2 826.0L58.5 821.5L34.8 817.0L11.2 812.6L-12.5 808.4L-36.3 804.2L-60.0 800.0 Z"/><clipPath id="cp_M6"><use href="#b_M6"/></clipPath><linearGradient id="g_H" gradientUnits="userSpaceOnUse" x1="200" y1="0" x2="1920" y2="0"><stop offset="0" stop-color="#1c2936"/><stop offset="0.25" stop-color="#1a2632"/><stop offset="0.6" stop-color="#182430"/><stop offset="1" stop-color="#141f2b"/></linearGradient><path id="b_H" d="M-60.0 800.0L-36.3 804.2L-12.5 808.4L11.2 812.6L34.8 817.0L58.5 821.5L82.2 826.0L105.8 830.5L129.5 834.9L153.2 839.0L176.9 842.7L200.7 846.0L224.6 848.7L248.6 850.8L272.5 852.5L296.6 853.7L320.6 854.5L344.7 855.0L368.8 855.2L392.9 855.2L416.9 854.9L441.0 854.4L465.1 853.7L489.2 852.9L513.2 851.9L537.3 850.9L561.4 849.8L585.4 848.5L609.5 847.2L633.6 845.8L657.6 844.3L681.6 842.6L705.6 840.8L729.6 838.7L753.6 836.4L777.5 833.7L801.4 830.9L825.3 827.7L849.1 824.2L872.9 820.5L896.7 816.6L920.4 812.5L944.1 808.2L967.8 803.6L991.4 798.9L1015.0 793.9L1038.5 788.7L1061.9 783.2L1085.3 777.5L1108.6 771.5L1131.9 765.3L1155.1 758.8L1178.2 752.1L1201.3 745.2L1224.3 738.1L1247.3 730.9L1270.2 723.5L1293.1 716.0L1316.0 708.4L1338.8 700.6L1361.6 692.8L1384.3 684.8L1407.0 676.8L1429.6 668.5L1452.2 660.1L1474.7 651.6L1497.2 642.9L1519.6 634.1L1542.1 625.3L1564.5 616.4L1586.9 607.6L1609.3 598.8L1631.8 590.1L1654.3 581.5L1676.8 572.9L1699.4 564.5L1722.0 556.3L1744.7 548.2L1767.5 540.3L1790.3 532.7L1813.2 525.2L1836.1 517.8L1859.1 510.6L1882.1 503.4L1905.1 496.2L1928.1 489.1L1951.1 481.8L1974.1 474.6L1997.0 467.3L2020.0 460.0 L2020.0 488.0 L1997.0 495.3L1974.1 502.6L1951.1 509.8L1928.1 517.1L1905.1 524.2L1882.1 531.2L1859.1 538.3L1836.1 545.5L1813.2 552.7L1790.3 560.1L1767.5 567.7L1744.7 575.5L1722.0 583.5L1699.4 591.7L1676.8 600.0L1654.3 609.8L1631.8 621.2L1609.3 632.7L1586.9 644.3L1564.5 655.9L1542.1 667.6L1519.6 679.2L1497.2 690.8L1474.7 702.2L1452.2 713.6L1429.6 724.8L1407.0 735.9L1384.3 746.2L1361.6 756.0L1338.8 765.7L1316.0 775.4L1293.1 784.9L1270.2 794.3L1247.3 803.6L1224.3 812.8L1201.3 821.8L1178.2 830.6L1155.1 839.2L1131.9 847.6L1108.6 855.8L1085.3 862.7L1061.9 868.8L1038.5 874.6L1015.0 880.1L991.4 885.4L967.8 890.5L944.1 895.4L920.4 900.1L896.7 904.5L872.9 908.8L849.1 912.8L825.3 916.6L801.4 917.8L777.5 917.6L753.6 917.1L729.6 916.3L705.6 915.3L681.6 914.0L657.6 912.6L633.6 911.0L609.5 909.4L585.4 907.7L561.4 905.9L537.3 902.9L513.2 899.8L489.2 896.5L465.1 893.1L441.0 889.5L416.9 885.8L392.9 881.9L368.8 877.6L344.7 873.1L320.6 868.3L296.6 863.7L272.5 860.6L248.6 855.6L224.6 850.2L200.7 846.0L176.9 842.7L153.2 839.0L129.5 834.9L105.8 830.5L82.2 826.0L58.5 821.5L34.8 817.0L11.2 812.6L-12.5 808.4L-36.3 804.2L-60.0 800.0 Z"/><clipPath id="cp_H"><use href="#b_H"/></clipPath><path id="b_H2" d="M-60.0 800.0L-36.3 804.2L-12.5 808.4L11.2 812.6L34.8 817.0L58.5 821.5L82.2 826.0L105.8 830.5L129.5 834.9L153.2 839.0L176.9 842.7L200.7 846.0L224.6 850.2L248.6 855.6L272.5 860.6L296.6 863.7L320.6 868.3L344.7 873.1L368.8 877.6L392.9 881.9L416.9 885.8L441.0 889.5L465.1 893.1L489.2 896.5L513.2 899.8L537.3 902.9L561.4 905.9L585.4 907.7L609.5 909.4L633.6 911.0L657.6 912.6L681.6 914.0L705.6 915.3L729.6 916.3L753.6 917.1L777.5 917.6L801.4 917.8L825.3 916.6L849.1 912.8L872.9 908.8L896.7 904.5L920.4 900.1L944.1 895.4L967.8 890.5L991.4 885.4L1015.0 880.1L1038.5 874.6L1061.9 868.8L1085.3 862.7L1108.6 855.8L1131.9 847.6L1155.1 839.2L1178.2 830.6L1201.3 821.8L1224.3 812.8L1247.3 803.6L1270.2 794.3L1293.1 784.9L1316.0 775.4L1338.8 765.7L1361.6 756.0L1384.3 746.2L1407.0 735.9L1429.6 724.8L1452.2 713.6L1474.7 702.2L1497.2 690.8L1519.6 679.2L1542.1 667.6L1564.5 655.9L1586.9 644.3L1609.3 632.7L1631.8 621.2L1654.3 609.8L1676.8 600.0L1699.4 591.7L1722.0 583.5L1744.7 575.5L1767.5 567.7L1790.3 560.1L1813.2 552.7L1836.1 545.5L1859.1 538.3L1882.1 531.2L1905.1 524.2L1928.1 517.1L1951.1 509.8L1974.1 502.6L1997.0 495.3L2020.0 488.0 L2020.0 542.0 L1997.0 549.8L1974.1 557.5L1951.1 565.2L1928.1 572.9L1905.1 580.6L1882.1 588.4L1859.1 596.2L1836.1 604.1L1813.2 612.1L1790.3 620.0L1767.5 626.2L1744.7 632.6L1722.0 639.2L1699.4 646.0L1676.8 652.9L1654.3 661.4L1631.8 671.4L1609.3 681.6L1586.9 691.8L1564.5 702.0L1542.1 712.3L1519.6 722.6L1497.2 732.8L1474.7 742.9L1452.2 752.9L1429.6 762.7L1407.0 772.4L1384.3 781.3L1361.6 789.8L1338.8 798.1L1316.0 806.3L1293.1 814.9L1270.2 823.8L1247.3 832.2L1224.3 839.9L1201.3 847.2L1178.2 853.9L1155.1 860.3L1131.9 866.2L1108.6 871.8L1085.3 876.1L1061.9 879.5L1038.5 882.8L1015.0 886.1L991.4 889.4L967.8 892.8L944.1 896.4L920.4 900.3L896.7 904.5L872.9 908.8L849.1 912.8L825.3 916.6L801.4 917.8L777.5 917.6L753.6 917.1L729.6 916.3L705.6 915.3L681.6 914.0L657.6 912.6L633.6 911.0L609.5 909.4L585.4 907.7L561.4 905.9L537.3 902.9L513.2 899.8L489.2 896.5L465.1 893.1L441.0 889.5L416.9 885.8L392.9 881.9L368.8 877.6L344.7 873.1L320.6 868.3L296.6 863.7L272.5 860.6L248.6 855.6L224.6 850.2L200.7 846.0L176.9 842.7L153.2 839.0L129.5 834.9L105.8 830.5L82.2 826.0L58.5 821.5L34.8 817.0L11.2 812.6L-12.5 808.4L-36.3 804.2L-60.0 800.0 Z"/><path id="b_M9" d="M-60.0 800.0L-36.3 804.2L-12.5 808.4L11.2 812.6L34.8 817.0L58.5 821.5L82.2 826.0L105.8 830.5L129.5 834.9L153.2 839.0L176.9 842.7L200.7 846.0L224.6 850.2L248.6 855.6L272.5 860.6L296.6 863.7L320.6 868.3L344.7 873.1L368.8 877.6L392.9 881.9L416.9 885.8L441.0 889.5L465.1 893.1L489.2 896.5L513.2 899.8L537.3 902.9L561.4 905.9L585.4 907.7L609.5 909.4L633.6 911.0L657.6 912.6L681.6 914.0L705.6 915.3L729.6 916.3L753.6 917.1L777.5 917.6L801.4 917.8L825.3 916.6L849.1 912.8L872.9 908.8L896.7 904.5L920.4 900.3L944.1 896.4L967.8 892.8L991.4 889.4L1015.0 886.1L1038.5 882.8L1061.9 879.5L1085.3 876.1L1108.6 871.8L1131.9 866.2L1155.1 860.3L1178.2 853.9L1201.3 847.2L1224.3 839.9L1247.3 832.2L1270.2 823.8L1293.1 814.9L1316.0 806.3L1338.8 798.1L1361.6 789.8L1384.3 781.3L1407.0 772.4L1429.6 762.7L1452.2 752.9L1474.7 742.9L1497.2 732.8L1519.6 722.6L1542.1 712.3L1564.5 702.0L1586.9 691.8L1609.3 681.6L1631.8 671.4L1654.3 661.4L1676.8 652.9L1699.4 646.0L1722.0 639.2L1744.7 632.6L1767.5 626.2L1790.3 620.0L1813.2 612.1L1836.1 604.1L1859.1 596.2L1882.1 588.4L1905.1 580.6L1928.1 572.9L1951.1 565.2L1974.1 557.5L1997.0 549.8L2020.0 542.0 L2020.0 810.0 L2008.2 812.5L1984.7 817.5L1961.2 822.4L1937.6 827.3L1914.1 832.2L1890.6 837.3L1867.2 842.5L1843.9 848.1L1820.7 854.2L1797.6 860.8L1774.6 867.8L1751.8 875.2L1729.1 883.0L1706.4 891.1L1683.8 899.3L1661.2 907.6L1638.7 916.0L1616.1 924.4L1593.6 932.7L1571.0 941.0L1548.4 949.2L1525.7 957.4L1503.0 965.3L1480.3 973.1L1457.5 980.7L1434.6 988.0L1411.6 995.1L1388.5 1001.9L1365.4 1008.3L1342.1 1014.5L1318.8 1020.3L1295.4 1025.9L1271.9 1031.0L1248.4 1035.9L1224.8 1040.4L1201.1 1044.6L1177.4 1048.4L1153.6 1051.8L1129.8 1054.9L1105.9 1057.6L1082.0 1060.0L1058.0 1061.9L1034.0 1063.4L1010.0 1064.5L986.0 1065.3L962.0 1065.8L937.9 1066.0L913.9 1066.0L889.8 1065.8L865.8 1065.5L841.7 1065.1L817.7 1064.7L793.6 1064.1L769.6 1063.4L745.5 1062.6L721.5 1061.6L697.5 1060.5L673.5 1059.2L649.4 1057.8L625.4 1056.3L601.4 1054.6L577.4 1052.8L553.5 1050.9L529.5 1048.8L505.6 1046.6L481.6 1044.2L457.7 1041.7L433.8 1039.0L409.9 1036.1L386.1 1032.9L362.3 1029.6L338.5 1026.0L314.8 1022.2L291.0 1018.2L267.4 1014.0L243.7 1009.6L220.1 1005.1L196.5 1000.4L172.9 995.6L149.4 990.5L126.0 985.3L102.5 979.8L79.2 974.1L55.9 968.2L32.6 962.1L9.4 955.8L-13.8 949.3L-36.9 942.7L-60.0 936.0 Z"/><clipPath id="cp_M9"><use href="#b_M9"/></clipPath><linearGradient id="g_I" gradientUnits="userSpaceOnUse" x1="800" y1="0" x2="1920" y2="0"><stop offset="0" stop-color="#16222f"/><stop offset="0.5" stop-color="#1a2a3a"/><stop offset="1" stop-color="#1e3042"/></linearGradient><path id="b_I" d="M-60.0 936.0L-36.9 942.7L-13.8 949.3L9.4 955.8L32.6 962.1L55.9 968.2L79.2 974.1L102.5 979.8L126.0 985.3L149.4 990.5L172.9 995.6L196.5 1000.4L220.1 1005.1L243.7 1009.6L267.4 1014.0L291.0 1018.2L314.8 1022.2L338.5 1026.0L362.3 1029.6L386.1 1032.9L409.9 1036.1L433.8 1039.0L457.7 1041.7L481.6 1044.2L505.6 1046.6L529.5 1048.8L553.5 1050.9L577.4 1052.8L601.4 1054.6L625.4 1056.3L649.4 1057.8L673.5 1059.2L697.5 1060.5L721.5 1061.6L745.5 1062.6L769.6 1063.4L793.6 1064.1L817.7 1064.7L841.7 1065.1L865.8 1065.5L889.8 1065.8L913.9 1066.0L937.9 1066.0L962.0 1065.8L986.0 1065.3L1010.0 1064.5L1034.0 1063.4L1058.0 1061.9L1082.0 1060.0L1105.9 1057.6L1129.8 1054.9L1153.6 1051.8L1177.4 1048.4L1201.1 1044.6L1224.8 1040.4L1248.4 1035.9L1271.9 1031.0L1295.4 1025.9L1318.8 1020.3L1342.1 1014.5L1365.4 1008.3L1388.5 1001.9L1411.6 995.1L1434.6 988.0L1457.5 980.7L1480.3 973.1L1503.0 965.3L1525.7 957.4L1548.4 949.2L1571.0 941.0L1593.6 932.7L1616.1 924.4L1638.7 916.0L1661.2 907.6L1683.8 899.3L1706.4 891.1L1729.1 883.0L1751.8 875.2L1774.6 867.8L1797.6 860.8L1820.7 854.2L1843.9 848.1L1867.2 842.5L1890.6 837.3L1914.1 832.2L1937.6 827.3L1961.2 822.4L1984.7 817.5L2008.2 812.5L2020.0 810.0 L2020.0 950.0 L2008.2 952.3L1984.7 956.8L1961.2 961.2L1937.6 965.7L1914.1 970.1L1890.6 974.6L1867.2 979.3L1843.9 984.4L1820.7 989.9L1797.6 995.9L1774.6 999.6L1751.8 1002.8L1729.1 1006.3L1706.4 1010.1L1683.8 1014.1L1661.2 1018.2L1638.7 1022.4L1616.1 1026.6L1593.6 1030.8L1571.0 1034.9L1548.4 1038.9L1525.7 1042.8L1503.0 1046.5L1480.3 1050.1L1457.5 1053.4L1434.6 1056.5L1411.6 1059.3L1388.5 1062.2L1365.4 1065.3L1342.1 1068.0L1318.8 1070.4L1295.4 1072.5L1271.9 1074.3L1248.4 1075.7L1224.8 1076.7L1201.1 1077.4L1177.4 1077.7L1153.6 1077.7L1129.8 1077.3L1105.9 1076.5L1082.0 1077.7L1058.0 1078.8L1034.0 1078.9L1010.0 1078.1L986.0 1076.8L962.0 1075.0L937.9 1072.9L913.9 1070.7L889.8 1068.6L865.8 1066.8L841.7 1065.5L817.7 1064.7L793.6 1064.1L769.6 1063.4L745.5 1062.6L721.5 1061.6L697.5 1060.5L673.5 1059.2L649.4 1057.8L625.4 1056.3L601.4 1054.6L577.4 1052.8L553.5 1050.9L529.5 1048.8L505.6 1046.6L481.6 1044.2L457.7 1041.7L433.8 1039.0L409.9 1036.1L386.1 1032.9L362.3 1029.6L338.5 1026.0L314.8 1022.2L291.0 1018.2L267.4 1014.0L243.7 1009.6L220.1 1005.1L196.5 1000.4L172.9 995.6L149.4 990.5L126.0 985.3L102.5 979.8L79.2 974.1L55.9 968.2L32.6 962.1L9.4 955.8L-13.8 949.3L-36.9 942.7L-60.0 936.0 Z"/><clipPath id="cp_I"><use href="#b_I"/></clipPath><linearGradient id="g_R3" gradientUnits="userSpaceOnUse" x1="0" y1="0" x2="1920" y2="0"><stop offset="0" stop-color="#0f1923"/><stop offset="0.08" stop-color="#121d28"/><stop offset="0.16" stop-color="#151f2b"/><stop offset="0.33" stop-color="#1d2b3a"/><stop offset="0.6" stop-color="#1c2b3b"/><stop offset="1" stop-color="#1e2f41"/></linearGradient><path id="b_R3" d="M-60.0 936.0L-36.9 942.7L-13.8 949.3L9.4 955.8L32.6 962.1L55.9 968.2L79.2 974.1L102.5 979.8L126.0 985.3L149.4 990.5L172.9 995.6L196.5 1000.4L220.1 1005.1L243.7 1009.6L267.4 1014.0L291.0 1018.2L314.8 1022.2L338.5 1026.0L362.3 1029.6L386.1 1032.9L409.9 1036.1L433.8 1039.0L457.7 1041.7L481.6 1044.2L505.6 1046.6L529.5 1048.8L553.5 1050.9L577.4 1052.8L601.4 1054.6L625.4 1056.3L649.4 1057.8L673.5 1059.2L697.5 1060.5L721.5 1061.6L745.5 1062.6L769.6 1063.4L793.6 1064.1L817.7 1064.7L841.7 1065.5L865.8 1066.8L889.8 1068.6L913.9 1070.7L937.9 1072.9L962.0 1075.0L986.0 1076.8L1010.0 1078.1L1034.0 1078.9L1058.0 1078.8L1082.0 1077.7L1105.9 1076.5L1129.8 1077.3L1153.6 1077.7L1177.4 1077.7L1201.1 1077.4L1224.8 1076.7L1248.4 1075.7L1271.9 1074.3L1295.4 1072.5L1318.8 1070.4L1342.1 1068.0L1365.4 1065.3L1388.5 1062.2L1411.6 1059.3L1434.6 1056.5L1457.5 1053.4L1480.3 1050.1L1503.0 1046.5L1525.7 1042.8L1548.4 1038.9L1571.0 1034.9L1593.6 1030.8L1616.1 1026.6L1638.7 1022.4L1661.2 1018.2L1683.8 1014.1L1706.4 1010.1L1729.1 1006.3L1751.8 1002.8L1774.6 999.6L1797.6 995.9L1820.7 989.9L1843.9 984.4L1867.2 979.3L1890.6 974.6L1914.1 970.1L1937.6 965.7L1961.2 961.2L1984.7 956.8L2008.2 952.3L2020.0 950.0 L2020.0 1200.0 L1996.0 1201.4L1972.0 1202.8L1948.0 1204.0L1924.0 1205.0L1900.0 1205.8L1875.9 1206.4L1851.9 1206.9L1827.8 1207.3L1803.8 1207.7L1779.7 1208.0L1755.7 1208.3L1731.6 1208.6L1707.6 1208.8L1683.5 1209.1L1659.5 1209.3L1635.4 1209.5L1611.4 1209.6L1587.3 1209.7L1563.3 1209.7L1539.2 1209.7L1515.2 1209.6L1491.1 1209.5L1467.0 1209.2L1443.0 1208.8L1419.0 1208.3L1394.9 1207.8L1370.9 1207.1L1346.8 1206.3L1322.8 1205.4L1298.8 1204.5L1274.7 1203.4L1250.7 1202.3L1226.7 1201.1L1202.7 1199.8L1178.6 1198.5L1154.6 1197.2L1130.6 1195.8L1106.6 1194.4L1082.6 1193.0L1058.6 1191.6L1034.6 1190.1L1010.6 1188.6L986.6 1186.9L962.6 1185.2L938.6 1183.3L914.7 1181.3L890.7 1179.2L866.7 1177.0L842.8 1174.6L818.9 1172.1L795.0 1169.6L771.1 1166.8L747.2 1164.0L723.3 1161.0L699.5 1157.7L675.7 1154.3L651.9 1150.7L628.2 1146.9L604.5 1142.8L580.8 1138.5L557.2 1134.1L533.6 1129.4L510.1 1124.6L486.5 1119.6L463.1 1114.4L439.6 1109.0L416.2 1103.4L392.9 1097.6L369.6 1091.7L346.4 1085.5L323.2 1079.2L300.0 1072.7L276.9 1066.1L253.8 1059.3L230.8 1052.4L207.8 1045.4L184.8 1038.4L161.8 1031.2L139.0 1023.8L116.2 1016.2L93.6 1008.1L71.1 999.6L48.9 990.6L26.8 981.2L4.9 971.3L-16.8 961.1L-38.4 950.6L-60.0 940.0 Z"/><clipPath id="cp_R3"><use href="#b_R3"/></clipPath><linearGradient id="g_RT" gradientUnits="userSpaceOnUse" x1="0" y1="0" x2="1920" y2="0"><stop offset="0" stop-color="#253d59"/><stop offset="0.4" stop-color="#263f5b"/><stop offset="1" stop-color="#233b56"/></linearGradient><path id="b_RT" d="M-60.0 940.0L-38.4 950.6L-16.8 961.1L4.9 971.3L26.8 981.2L48.9 990.6L71.1 999.6L93.6 1008.1L116.2 1016.2L139.0 1023.8L161.8 1031.2L184.8 1038.4L207.8 1045.4L230.8 1052.4L253.8 1059.3L276.9 1066.1L300.0 1072.7L323.2 1079.2L346.4 1085.5L369.6 1091.7L392.9 1097.6L416.2 1103.4L439.6 1109.0L463.1 1114.4L486.5 1119.6L510.1 1124.6L533.6 1129.4L557.2 1134.1L580.8 1138.5L604.5 1142.8L628.2 1146.9L651.9 1150.7L675.7 1154.3L699.5 1157.7L723.3 1161.0L747.2 1164.0L771.1 1166.8L795.0 1169.6L818.9 1172.1L842.8 1174.6L866.7 1177.0L890.7 1179.2L914.7 1181.3L938.6 1183.3L962.6 1185.2L986.6 1186.9L1010.6 1188.6L1034.6 1190.1L1058.6 1191.6L1082.6 1193.0L1106.6 1194.4L1130.6 1195.8L1154.6 1197.2L1178.6 1198.5L1202.7 1199.8L1226.7 1201.1L1250.7 1202.3L1274.7 1203.4L1298.8 1204.5L1322.8 1205.4L1346.8 1206.3L1370.9 1207.1L1394.9 1207.8L1419.0 1208.3L1443.0 1208.8L1467.0 1209.2L1491.1 1209.5L1515.2 1209.6L1539.2 1209.7L1563.3 1209.7L1587.3 1209.7L1611.4 1209.6L1635.4 1209.5L1659.5 1209.3L1683.5 1209.1L1707.6 1208.8L1731.6 1208.6L1755.7 1208.3L1779.7 1208.0L1803.8 1207.7L1827.8 1207.3L1851.9 1206.9L1875.9 1206.4L1900.0 1205.8L1924.0 1205.0L1948.0 1204.0L1972.0 1202.8L1996.0 1201.4L2020.0 1200.0 L2020.0 1232.0 L1996.0 1233.0L1972.0 1233.9L1948.0 1234.7L1924.0 1235.5L1900.0 1236.2L1876.0 1236.8L1852.0 1237.4L1828.0 1237.9L1804.0 1238.4L1780.0 1238.8L1756.0 1239.3L1732.0 1239.8L1708.0 1240.2L1684.0 1240.6L1659.9 1241.0L1635.9 1241.4L1611.9 1241.7L1587.9 1242.0L1563.9 1242.3L1539.9 1242.5L1515.9 1242.7L1491.9 1242.7L1467.9 1242.7L1443.9 1242.6L1419.8 1242.5L1395.8 1242.2L1371.8 1241.8L1347.8 1241.4L1323.8 1240.8L1299.8 1240.2L1275.8 1239.5L1251.8 1238.7L1227.8 1237.8L1203.8 1236.9L1179.8 1235.8L1155.8 1234.7L1131.9 1233.6L1107.9 1232.3L1083.9 1231.1L1059.9 1229.7L1036.0 1228.2L1012.0 1226.5L988.1 1224.7L964.2 1222.8L940.2 1220.6L916.3 1218.3L892.5 1215.8L868.6 1213.2L844.8 1210.4L820.9 1207.5L797.1 1204.5L773.3 1201.3L749.5 1198.0L725.7 1194.6L702.0 1191.1L678.3 1187.4L654.6 1183.6L630.9 1179.7L607.2 1175.6L583.6 1171.4L560.0 1167.1L536.4 1162.6L512.8 1158.1L489.2 1153.4L465.7 1148.6L442.2 1143.7L418.7 1138.7L395.3 1133.5L371.9 1128.1L348.6 1122.6L325.3 1116.8L302.0 1110.8L278.8 1104.6L255.7 1098.1L232.6 1091.5L209.6 1084.7L186.7 1077.7L163.8 1070.4L141.0 1062.8L118.3 1055.0L95.8 1046.9L73.3 1038.6L50.8 1030.0L28.5 1021.1L6.3 1012.1L-15.8 1002.8L-37.9 993.5L-60.0 984.0 Z"/><clipPath id="cp_RT"><use href="#b_RT"/></clipPath><path id="b_RB" d="M-60.0 984.0L-37.9 993.5L-15.8 1002.8L6.3 1012.1L28.5 1021.1L50.8 1030.0L73.3 1038.6L95.8 1046.9L118.3 1055.0L141.0 1062.8L163.8 1070.4L186.7 1077.7L209.6 1084.7L232.6 1091.5L255.7 1098.1L278.8 1104.6L302.0 1110.8L325.3 1116.8L348.6 1122.6L371.9 1128.1L395.3 1133.5L418.7 1138.7L442.2 1143.7L465.7 1148.6L489.2 1153.4L512.8 1158.1L536.4 1162.6L560.0 1167.1L583.6 1171.4L607.2 1175.6L630.9 1179.7L654.6 1183.6L678.3 1187.4L702.0 1191.1L725.7 1194.6L749.5 1198.0L773.3 1201.3L797.1 1204.5L820.9 1207.5L844.8 1210.4L868.6 1213.2L892.5 1215.8L916.3 1218.3L940.2 1220.6L964.2 1222.8L988.1 1224.7L1012.0 1226.5L1036.0 1228.2L1059.9 1229.7L1083.9 1231.1L1107.9 1232.3L1131.9 1233.6L1155.8 1234.7L1179.8 1235.8L1203.8 1236.9L1227.8 1237.8L1251.8 1238.7L1275.8 1239.5L1299.8 1240.2L1323.8 1240.8L1347.8 1241.4L1371.8 1241.8L1395.8 1242.2L1419.8 1242.5L1443.9 1242.6L1467.9 1242.7L1491.9 1242.7L1515.9 1242.7L1539.9 1242.5L1563.9 1242.3L1587.9 1242.0L1611.9 1241.7L1635.9 1241.4L1659.9 1241.0L1684.0 1240.6L1708.0 1240.2L1732.0 1239.8L1756.0 1239.3L1780.0 1238.8L1804.0 1238.4L1828.0 1237.9L1852.0 1237.4L1876.0 1236.8L1900.0 1236.2L1924.0 1235.5L1948.0 1234.7L1972.0 1233.9L1996.0 1233.0L2020.0 1232.0 L2060 1420 L420.0 1312.0 L397.2 1304.3L374.3 1296.6L351.5 1289.0L328.6 1281.3L305.8 1273.6L282.9 1266.0L260.0 1258.4L237.2 1250.8L214.3 1243.3L191.4 1235.9L168.4 1228.5L145.5 1221.2L122.5 1213.9L99.5 1206.6L76.6 1199.2L53.7 1191.7L30.8 1184.1L8.0 1176.3L-14.7 1168.3L-37.4 1160.2L-60.0 1152.0 Z"/><clipPath id="cp_RB"><use href="#b_RB"/></clipPath><path id="b_J" d="M-60.0 1152.0L-37.4 1160.2L-14.7 1168.3L8.0 1176.3L30.8 1184.1L53.7 1191.7L76.6 1199.2L99.5 1206.6L122.5 1213.9L145.5 1221.2L168.4 1228.5L191.4 1235.9L214.3 1243.3L237.2 1250.8L260.0 1258.4L282.9 1266.0L305.8 1273.6L328.6 1281.3L351.5 1289.0L374.3 1296.6L397.2 1304.3L420.0 1312.0 L450 1420 L-120 1420 Z"/><clipPath id="cp_J"><use href="#b_J"/></clipPath><path id="e_B" d="M-60.0 362.0L-36.7 355.2L-13.5 348.3L9.8 341.4L32.9 334.3L56.0 326.9L78.8 319.0L101.4 310.5L123.6 301.2L145.5 291.1L167.1 280.2L188.2 268.6L208.9 256.2L229.3 243.2L249.4 229.7L269.1 215.7L288.6 201.4L307.9 186.7L327.0 171.7L345.9 156.5L364.7 141.3L383.5 126.0L402.3 110.6L421.1 95.2L439.8 79.8L458.6 64.5L477.4 49.1L496.2 33.8L515.0 18.5L533.8 3.2L552.7 -12.1L571.6 -27.3L590.5 -42.4L600.0 -50.0"/><path id="e_C" d="M-60.0 398.0L-37.6 389.0L-15.2 380.0L7.2 370.8L29.4 361.5L51.7 352.0L73.8 342.3L95.9 332.6L118.0 322.7L140.0 312.8L162.0 302.8L183.9 292.7L205.9 282.5L227.7 272.2L249.6 261.9L271.3 251.4L293.0 240.7L314.7 230.0L336.3 219.2L357.8 208.2L379.3 197.1L400.7 186.0L422.0 174.7L443.3 163.2L464.4 151.5L485.3 139.5L506.0 127.1L526.4 114.4L546.7 101.3L566.7 87.9L586.6 74.3L606.5 60.6L626.3 46.7L646.1 32.9L665.9 19.0L685.7 5.2L705.5 -8.6L725.3 -22.4L745.2 -36.2L765.0 -50.0"/><path id="e_H" d="M-60.0 800.0L-36.3 804.2L-12.5 808.4L11.2 812.6L34.8 817.0L58.5 821.5L82.2 826.0L105.8 830.5L129.5 834.9L153.2 839.0L176.9 842.7L200.7 846.0L224.6 848.7L248.6 850.8L272.5 852.5L296.6 853.7L320.6 854.5L344.7 855.0L368.8 855.2L392.9 855.2L416.9 854.9L441.0 854.4L465.1 853.7L489.2 852.9L513.2 851.9L537.3 850.9L561.4 849.8L585.4 848.5L609.5 847.2L633.6 845.8L657.6 844.3L681.6 842.6L705.6 840.8L729.6 838.7L753.6 836.4L777.5 833.7L801.4 830.9L825.3 827.7L849.1 824.2L872.9 820.5L896.7 816.6L920.4 812.5L944.1 808.2L967.8 803.6L991.4 798.9L1015.0 793.9L1038.5 788.7L1061.9 783.2L1085.3 777.5L1108.6 771.5L1131.9 765.3L1155.1 758.8L1178.2 752.1L1201.3 745.2L1224.3 738.1L1247.3 730.9L1270.2 723.5L1293.1 716.0L1316.0 708.4L1338.8 700.6L1361.6 692.8L1384.3 684.8L1407.0 676.8L1429.6 668.5L1452.2 660.1L1474.7 651.6L1497.2 642.9L1519.6 634.1L1542.1 625.3L1564.5 616.4L1586.9 607.6L1609.3 598.8L1631.8 590.1L1654.3 581.5L1676.8 572.9L1699.4 564.5L1722.0 556.3L1744.7 548.2L1767.5 540.3L1790.3 532.7L1813.2 525.2L1836.1 517.8L1859.1 510.6L1882.1 503.4L1905.1 496.2L1928.1 489.1L1951.1 481.8L1974.1 474.6L1997.0 467.3L2020.0 460.0"/><path id="e_H2" d="M-60.0 800.0L-36.3 804.2L-12.5 808.4L11.2 812.6L34.8 817.0L58.5 821.5L82.2 826.0L105.8 830.5L129.5 834.9L153.2 839.0L176.9 842.7L200.7 846.0L224.6 850.2L248.6 855.6L272.5 860.6L296.6 863.7L320.6 868.3L344.7 873.1L368.8 877.6L392.9 881.9L416.9 885.8L441.0 889.5L465.1 893.1L489.2 896.5L513.2 899.8L537.3 902.9L561.4 905.9L585.4 907.7L609.5 909.4L633.6 911.0L657.6 912.6L681.6 914.0L705.6 915.3L729.6 916.3L753.6 917.1L777.5 917.6L801.4 917.8L825.3 916.6L849.1 912.8L872.9 908.8L896.7 904.5L920.4 900.1L944.1 895.4L967.8 890.5L991.4 885.4L1015.0 880.1L1038.5 874.6L1061.9 868.8L1085.3 862.7L1108.6 855.8L1131.9 847.6L1155.1 839.2L1178.2 830.6L1201.3 821.8L1224.3 812.8L1247.3 803.6L1270.2 794.3L1293.1 784.9L1316.0 775.4L1338.8 765.7L1361.6 756.0L1384.3 746.2L1407.0 735.9L1429.6 724.8L1452.2 713.6L1474.7 702.2L1497.2 690.8L1519.6 679.2L1542.1 667.6L1564.5 655.9L1586.9 644.3L1609.3 632.7L1631.8 621.2L1654.3 609.8L1676.8 600.0L1699.4 591.7L1722.0 583.5L1744.7 575.5L1767.5 567.7L1790.3 560.1L1813.2 552.7L1836.1 545.5L1859.1 538.3L1882.1 531.2L1905.1 524.2L1928.1 517.1L1951.1 509.8L1974.1 502.6L1997.0 495.3L2020.0 488.0"/><path id="e_I" d="M-60.0 936.0L-36.9 942.7L-13.8 949.3L9.4 955.8L32.6 962.1L55.9 968.2L79.2 974.1L102.5 979.8L126.0 985.3L149.4 990.5L172.9 995.6L196.5 1000.4L220.1 1005.1L243.7 1009.6L267.4 1014.0L291.0 1018.2L314.8 1022.2L338.5 1026.0L362.3 1029.6L386.1 1032.9L409.9 1036.1L433.8 1039.0L457.7 1041.7L481.6 1044.2L505.6 1046.6L529.5 1048.8L553.5 1050.9L577.4 1052.8L601.4 1054.6L625.4 1056.3L649.4 1057.8L673.5 1059.2L697.5 1060.5L721.5 1061.6L745.5 1062.6L769.6 1063.4L793.6 1064.1L817.7 1064.7L841.7 1065.1L865.8 1065.5L889.8 1065.8L913.9 1066.0L937.9 1066.0L962.0 1065.8L986.0 1065.3L1010.0 1064.5L1034.0 1063.4L1058.0 1061.9L1082.0 1060.0L1105.9 1057.6L1129.8 1054.9L1153.6 1051.8L1177.4 1048.4L1201.1 1044.6L1224.8 1040.4L1248.4 1035.9L1271.9 1031.0L1295.4 1025.9L1318.8 1020.3L1342.1 1014.5L1365.4 1008.3L1388.5 1001.9L1411.6 995.1L1434.6 988.0L1457.5 980.7L1480.3 973.1L1503.0 965.3L1525.7 957.4L1548.4 949.2L1571.0 941.0L1593.6 932.7L1616.1 924.4L1638.7 916.0L1661.2 907.6L1683.8 899.3L1706.4 891.1L1729.1 883.0L1751.8 875.2L1774.6 867.8L1797.6 860.8L1820.7 854.2L1843.9 848.1L1867.2 842.5L1890.6 837.3L1914.1 832.2L1937.6 827.3L1961.2 822.4L1984.7 817.5L2008.2 812.5L2020.0 810.0"/><path id="e_J" d="M-60.0 1152.0L-37.4 1160.2L-14.7 1168.3L8.0 1176.3L30.8 1184.1L53.7 1191.7L76.6 1199.2L99.5 1206.6L122.5 1213.9L145.5 1221.2L168.4 1228.5L191.4 1235.9L214.3 1243.3L237.2 1250.8L260.0 1258.4L282.9 1266.0L305.8 1273.6L328.6 1281.3L351.5 1289.0L374.3 1296.6L397.2 1304.3L420.0 1312.0"/><path id="e_L1" d="M-60.0 506.0L-36.4 501.6L-12.8 497.2L10.9 492.7L34.5 488.3L58.1 483.8L81.7 479.4L105.3 475.0L128.9 470.7L152.6 466.4L176.2 462.2L199.9 458.1L223.6 454.0L247.2 449.8L270.9 445.6L294.4 441.1L317.9 436.3L341.3 431.1L364.5 425.2L387.5 418.7L410.1 411.2L432.3 402.7L454.0 393.2L475.2 382.5L496.0 370.9L516.3 358.4L536.4 345.4L556.3 332.1L576.2 318.8L596.2 305.6L616.3 292.6L636.7 279.9L657.3 267.6L678.0 255.5L698.9 243.7L720.0 232.1L741.1 220.7L762.4 209.6L783.7 198.6L805.2 187.8L826.7 177.2L848.2 166.5L869.8 155.9L891.2 145.1L912.6 134.2L934.0 123.1L955.2 111.9L976.4 100.6L997.5 89.2L1018.6 77.6L1039.6 66.0L1060.6 54.3L1081.6 42.6L1102.6 30.9L1123.5 19.2L1144.5 7.5L1165.6 -4.1L1186.6 -15.7L1207.7 -27.1L1228.9 -38.6L1250.0 -50.0"/><path id="e_L4" d="M-60.0 556.0L-36.4 551.3L-12.8 546.5L10.8 541.8L34.4 537.3L58.1 533.0L81.8 529.2L105.5 525.8L129.4 523.1L153.3 520.9L177.3 519.2L201.3 518.0L225.3 517.0L249.4 516.3L273.5 515.6L297.5 515.0L321.6 514.2L345.6 513.3L369.7 512.2L393.7 510.7L417.6 508.7L441.5 506.3L465.4 503.2L489.1 499.5L512.6 495.1L536.1 490.0L559.3 484.1L582.4 477.5L605.3 470.2L627.9 462.3L650.4 453.9L672.8 445.1L695.0 435.8L717.2 426.4L739.2 416.9L761.3 407.2L783.4 397.7L805.5 388.1L827.6 378.5L849.7 368.9L871.7 359.2L893.7 349.4L915.5 339.3L937.2 328.9L958.8 318.2L980.1 307.1L1001.3 295.7L1022.3 283.9L1043.1 271.9L1063.9 259.8L1084.7 247.6L1105.4 235.4L1126.2 223.2L1147.0 211.0L1167.8 198.9L1188.6 186.7L1209.3 174.5L1230.0 162.2L1250.7 149.9L1271.3 137.4L1291.8 124.8L1312.3 112.0L1332.6 99.2L1353.0 86.3L1373.3 73.4L1393.6 60.5L1414.0 47.7L1434.5 35.0L1455.0 22.5L1475.7 10.1L1496.4 -2.1L1517.3 -14.2L1538.2 -26.2L1559.1 -38.1L1580.0 -50.0"/><path id="e_L5" d="M-60.0 573.0L-36.5 568.2L-12.9 563.5L10.6 558.8L34.1 554.3L57.7 550.0L81.4 546.2L105.1 542.9L128.9 540.2L152.7 538.1L176.6 536.6L200.6 535.4L224.6 534.6L248.6 534.1L272.6 533.6L296.6 533.2L320.6 532.7L344.6 532.2L368.6 531.4L392.6 530.5L416.6 529.2L440.5 527.5L464.4 525.4L488.2 522.8L512.0 519.6L535.6 515.8L559.1 511.3L582.5 506.0L605.6 500.1L628.6 493.5L651.5 486.3L674.2 478.6L696.8 470.5L719.3 462.2L741.8 453.8L764.3 445.4L786.8 437.0L809.3 428.6L831.8 420.3L854.4 412.0L876.9 403.7L899.5 395.4L922.0 387.1L944.6 378.8L967.1 370.5L989.6 362.1L1012.0 353.5L1034.4 344.8L1056.7 335.8L1078.8 326.5L1100.7 316.8L1122.4 306.7L1143.9 296.2L1165.2 285.3L1186.5 274.2L1207.7 263.0L1229.0 251.8L1250.2 240.7L1271.6 229.7L1293.0 218.8L1314.4 208.0L1335.9 197.2L1357.3 186.4L1378.8 175.6L1400.3 164.9L1421.8 154.1L1443.2 143.3L1464.7 132.4L1486.1 121.6L1507.5 110.7L1528.9 99.9L1550.4 89.0L1571.8 78.1L1593.2 67.2L1614.6 56.3L1636.0 45.4L1657.4 34.6L1678.9 23.8L1700.4 13.0L1721.9 2.3L1743.4 -8.3L1765.0 -18.8L1786.7 -29.2L1808.3 -39.6L1830.0 -50.0"/><path id="e_L6" d="M-60.0 603.0L-36.4 598.8L-12.7 594.7L10.9 590.6L34.5 586.6L58.2 582.9L81.9 579.5L105.7 576.6L129.5 574.3L153.4 572.6L177.3 571.5L201.2 571.0L225.2 571.0L249.1 571.5L273.1 572.4L297.0 573.7L320.9 575.4L344.8 577.3L368.7 579.4L392.6 581.6L416.5 583.6L440.4 585.5L464.3 587.1L488.3 588.4L512.2 589.2L536.2 589.7L560.2 589.9L584.1 589.6L608.1 588.8L632.0 587.6L655.8 585.8L679.6 583.2L703.1 579.8L726.5 575.5L749.6 570.0L772.4 563.4L794.9 555.7L817.0 547.0L838.9 537.5L860.6 527.6L882.3 517.3L903.9 507.0L925.6 496.9L947.5 487.1L969.5 477.5L991.6 468.3L1013.8 459.3L1036.1 450.5L1058.5 441.8L1080.9 433.1L1103.2 424.4L1125.6 415.6L1147.9 406.8L1170.2 398.0L1192.5 389.1L1214.8 380.3L1237.1 371.4L1259.4 362.5L1281.7 353.5L1303.8 344.4L1325.9 335.0L1347.8 325.4L1369.5 315.3L1391.1 304.8L1412.3 293.8L1433.4 282.4L1454.3 270.7L1475.1 258.8L1495.8 246.6L1516.4 234.4L1537.0 222.1L1557.7 209.9L1578.3 197.6L1599.0 185.4L1619.6 173.2L1640.4 161.1L1661.2 149.1L1682.0 137.2L1702.9 125.4L1723.8 113.7L1744.8 102.1L1765.9 90.5L1787.0 79.1L1808.1 67.7L1829.2 56.3L1850.4 45.0L1871.6 33.7L1892.8 22.5L1914.0 11.2L1935.2 -0.1L1956.4 -11.3L1977.6 -22.5L1998.8 -33.8L2020.0 -45.0"/><path id="e_L7" d="M-60.0 613.0L-36.4 608.8L-12.7 604.7L10.9 600.6L34.5 596.6L58.2 592.9L81.9 589.5L105.7 586.6L129.5 584.3L153.4 582.6L177.3 581.5L201.2 581.0L225.2 581.0L249.1 581.5L273.1 582.4L297.0 583.7L320.9 585.4L344.8 587.3L368.7 589.4L392.6 591.6L416.5 593.6L440.4 595.5L464.3 596.9L488.3 597.7L512.2 598.2L536.2 598.4L560.2 598.1L584.1 597.4L608.1 596.3L632.0 594.7L655.8 592.5L679.6 589.5L703.1 585.7L726.5 580.7L749.6 574.6L772.4 567.4L794.9 561.2L817.0 554.0L838.9 546.1L860.6 537.6L882.3 528.8L903.9 519.9L925.6 511.3L947.5 503.5L969.5 496.4L991.6 489.7L1013.8 483.2L1036.1 477.0L1058.5 470.8L1080.9 464.6L1103.2 458.5L1125.6 452.3L1147.9 446.1L1170.2 439.9L1192.5 433.6L1214.8 427.3L1237.1 421.1L1259.4 413.9L1281.7 406.6L1303.8 399.1L1325.9 391.4L1347.8 383.3L1369.5 374.9L1391.1 366.1L1412.3 356.9L1433.4 347.2L1454.3 337.2L1475.1 326.9L1495.8 316.5L1516.4 305.9L1537.0 296.3L1557.7 287.0L1578.3 277.8L1599.0 268.5L1619.6 259.4L1640.4 250.3L1661.2 241.3L1682.0 232.4L1702.9 223.6L1723.8 214.1L1744.8 203.4L1765.9 192.8L1787.0 182.2L1808.1 171.8L1829.2 161.3L1850.4 151.0L1871.6 140.6L1892.8 130.3L1914.0 119.9L1935.2 109.4L1956.4 98.8L1977.6 88.2L1998.8 77.6L2020.0 67.0"/><path id="e_M3" d="M-60.0 737.0L-36.0 735.2L-12.0 733.4L12.1 731.7L36.1 730.1L60.1 728.5L84.2 727.0L108.2 725.5L132.3 724.0L156.3 722.5L180.3 720.9L204.4 719.3L228.4 717.6L252.4 715.9L276.5 714.1L300.5 712.2L324.5 710.3L348.5 708.3L372.5 706.3L396.5 704.2L420.5 702.1L444.5 700.0L468.5 697.7L492.4 695.4L516.4 692.9L540.3 690.2L564.2 687.3L588.1 684.1L611.9 680.6L635.7 676.8L659.4 672.7L683.1 668.4L706.7 663.8L730.3 659.1L753.9 654.2L777.4 649.2L800.9 644.1L824.3 638.7L847.6 633.0L870.8 626.8L893.9 620.1L916.8 612.9L939.5 605.2L962.1 597.0L984.7 588.6L1007.1 579.9L1029.5 571.1L1051.9 562.2L1074.3 553.2L1096.6 544.2L1118.9 535.2L1141.3 526.1L1163.6 517.0L1185.9 508.0L1208.2 498.9L1230.5 489.8L1252.8 480.6L1275.1 471.5L1297.4 462.4L1319.7 453.2L1341.9 444.1L1364.2 434.9L1386.6 425.9L1408.9 416.9L1431.3 408.1L1453.8 399.3L1476.3 390.7L1498.8 382.2L1521.4 373.9L1544.0 365.5L1566.6 357.2L1589.2 348.8L1611.7 340.3L1634.1 331.6L1656.4 322.6L1678.6 313.3L1700.7 303.6L1722.5 293.6L1744.2 283.1L1765.7 272.4L1787.1 261.4L1808.5 250.2L1829.7 238.9L1850.9 227.5L1872.1 216.0L1893.3 204.5L1914.4 193.0L1935.6 181.4L1956.7 169.8L1977.8 158.2L1998.9 146.6L2020.0 135.0"/><path id="e_M5" d="M-60.0 800.0L-36.3 804.2L-12.5 808.4L11.2 812.6L34.8 817.0L58.5 821.5L82.2 826.0L105.8 830.5L129.5 833.0L153.2 831.1L176.9 826.9L200.7 822.8L224.6 821.1L248.6 820.9L272.5 819.5L296.6 817.7L320.6 815.5L344.7 813.0L368.8 810.2L392.9 807.1L416.9 804.9L441.0 803.0L465.1 800.9L489.2 798.7L513.2 796.4L537.3 794.0L561.4 791.4L585.4 788.8L609.5 786.1L633.6 783.1L657.6 779.6L681.6 775.9L705.6 772.0L729.6 768.0L753.6 763.6L777.5 759.0L801.4 754.1L825.3 749.5L849.1 745.4L872.9 741.2L896.7 736.7L920.4 732.0L944.1 727.0L967.8 721.9L991.4 716.6L1015.0 711.0L1038.5 705.2L1061.9 699.2L1085.3 692.9L1108.6 687.4L1131.9 683.4L1155.1 679.2L1178.2 674.7L1201.3 670.0L1224.3 665.2L1247.3 660.2L1270.2 655.0L1293.1 649.7L1316.0 644.3L1338.8 638.8L1361.6 633.2L1384.3 627.4L1407.0 621.5L1429.6 615.5L1452.2 607.8L1474.7 598.8L1497.2 589.6L1519.6 580.3L1542.1 570.9L1564.5 561.6L1586.9 552.2L1609.3 542.9L1631.8 534.6L1654.3 526.6L1676.8 518.7L1699.4 510.9L1722.0 503.3L1744.7 495.9L1767.5 488.7L1790.3 481.7L1813.2 474.3L1836.1 467.2L1859.1 460.1L1882.1 453.1L1905.1 446.1L1928.1 439.1L1951.1 431.8L1974.1 424.6L1997.0 417.3L2020.0 410.0"/><path id="e_R3" d="M-60.0 936.0L-36.9 942.7L-13.8 949.3L9.4 955.8L32.6 962.1L55.9 968.2L79.2 974.1L102.5 979.8L126.0 985.3L149.4 990.5L172.9 995.6L196.5 1000.4L220.1 1005.1L243.7 1009.6L267.4 1014.0L291.0 1018.2L314.8 1022.2L338.5 1026.0L362.3 1029.6L386.1 1032.9L409.9 1036.1L433.8 1039.0L457.7 1041.7L481.6 1044.2L505.6 1046.6L529.5 1048.8L553.5 1050.9L577.4 1052.8L601.4 1054.6L625.4 1056.3L649.4 1057.8L673.5 1059.2L697.5 1060.5L721.5 1061.6L745.5 1062.6L769.6 1063.4L793.6 1064.1L817.7 1064.7L841.7 1065.5L865.8 1066.8L889.8 1068.6L913.9 1070.7L937.9 1072.9L962.0 1075.0L986.0 1076.8L1010.0 1078.1L1034.0 1078.9L1058.0 1078.8L1082.0 1077.7L1105.9 1076.5L1129.8 1077.3L1153.6 1077.7L1177.4 1077.7L1201.1 1077.4L1224.8 1076.7L1248.4 1075.7L1271.9 1074.3L1295.4 1072.5L1318.8 1070.4L1342.1 1068.0L1365.4 1065.3L1388.5 1062.2L1411.6 1059.3L1434.6 1056.5L1457.5 1053.4L1480.3 1050.1L1503.0 1046.5L1525.7 1042.8L1548.4 1038.9L1571.0 1034.9L1593.6 1030.8L1616.1 1026.6L1638.7 1022.4L1661.2 1018.2L1683.8 1014.1L1706.4 1010.1L1729.1 1006.3L1751.8 1002.8L1774.6 999.6L1797.6 995.9L1820.7 989.9L1843.9 984.4L1867.2 979.3L1890.6 974.6L1914.1 970.1L1937.6 965.7L1961.2 961.2L1984.7 956.8L2008.2 952.3L2020.0 950.0"/><path id="e_RB" d="M-60.0 984.0L-37.9 993.5L-15.8 1002.8L6.3 1012.1L28.5 1021.1L50.8 1030.0L73.3 1038.6L95.8 1046.9L118.3 1055.0L141.0 1062.8L163.8 1070.4L186.7 1077.7L209.6 1084.7L232.6 1091.5L255.7 1098.1L278.8 1104.6L302.0 1110.8L325.3 1116.8L348.6 1122.6L371.9 1128.1L395.3 1133.5L418.7 1138.7L442.2 1143.7L465.7 1148.6L489.2 1153.4L512.8 1158.1L536.4 1162.6L560.0 1167.1L583.6 1171.4L607.2 1175.6L630.9 1179.7L654.6 1183.6L678.3 1187.4L702.0 1191.1L725.7 1194.6L749.5 1198.0L773.3 1201.3L797.1 1204.5L820.9 1207.5L844.8 1210.4L868.6 1213.2L892.5 1215.8L916.3 1218.3L940.2 1220.6L964.2 1222.8L988.1 1224.7L1012.0 1226.5L1036.0 1228.2L1059.9 1229.7L1083.9 1231.1L1107.9 1232.3L1131.9 1233.6L1155.8 1234.7L1179.8 1235.8L1203.8 1236.9L1227.8 1237.8L1251.8 1238.7L1275.8 1239.5L1299.8 1240.2L1323.8 1240.8L1347.8 1241.4L1371.8 1241.8L1395.8 1242.2L1419.8 1242.5L1443.9 1242.6L1467.9 1242.7L1491.9 1242.7L1515.9 1242.7L1539.9 1242.5L1563.9 1242.3L1587.9 1242.0L1611.9 1241.7L1635.9 1241.4L1659.9 1241.0L1684.0 1240.6L1708.0 1240.2L1732.0 1239.8L1756.0 1239.3L1780.0 1238.8L1804.0 1238.4L1828.0 1237.9L1852.0 1237.4L1876.0 1236.8L1900.0 1236.2L1924.0 1235.5L1948.0 1234.7L1972.0 1233.9L1996.0 1233.0L2020.0 1232.0"/><path id="e_ea" d="M-60.0 486.0L-36.2 481.4L-12.5 476.8L11.3 472.1L34.9 467.2L58.4 461.9L81.8 455.9L104.9 449.2L127.7 441.7L150.3 433.2L172.6 424.1L194.7 414.3L216.7 404.1L238.4 393.5L260.1 382.6L281.7 371.6L303.2 360.4L324.6 349.1L346.0 337.8L367.4 326.3L388.7 314.8L410.0 303.2L431.2 291.4L452.4 279.6L473.5 267.7L494.6 255.8L515.6 243.7L536.6 231.6L557.6 219.5L578.6 207.4L599.5 195.2L620.4 182.9L641.3 170.5L662.0 158.0L682.6 145.2L703.1 132.3L723.3 119.0L743.4 105.5L763.3 91.7L783.1 77.7L802.8 63.6L822.5 49.4L842.1 35.1L861.7 20.9L881.3 6.7L901.0 -7.5L920.6 -21.7L940.3 -35.9L960.0 -50.0"/><filter id="bl1_6" filterUnits="userSpaceOnUse" x="-200" y="-200" width="2320" height="1680" color-interpolation-filters="sRGB"><feGaussianBlur stdDeviation="1.6"/></filter><filter id="bl2" filterUnits="userSpaceOnUse" x="-200" y="-200" width="2320" height="1680" color-interpolation-filters="sRGB"><feGaussianBlur stdDeviation="2"/></filter><filter id="bl2_2" filterUnits="userSpaceOnUse" x="-200" y="-200" width="2320" height="1680" color-interpolation-filters="sRGB"><feGaussianBlur stdDeviation="2.2"/></filter><filter id="bl2_5" filterUnits="userSpaceOnUse" x="-200" y="-200" width="2320" height="1680" color-interpolation-filters="sRGB"><feGaussianBlur stdDeviation="2.5"/></filter><filter id="bl2_6" filterUnits="userSpaceOnUse" x="-200" y="-200" width="2320" height="1680" color-interpolation-filters="sRGB"><feGaussianBlur stdDeviation="2.6"/></filter><filter id="bl3" filterUnits="userSpaceOnUse" x="-200" y="-200" width="2320" height="1680" color-interpolation-filters="sRGB"><feGaussianBlur stdDeviation="3"/></filter><filter id="bl4" filterUnits="userSpaceOnUse" x="-200" y="-200" width="2320" height="1680" color-interpolation-filters="sRGB"><feGaussianBlur stdDeviation="4"/></filter><filter id="bl7" filterUnits="userSpaceOnUse" x="-200" y="-200" width="2320" height="1680" color-interpolation-filters="sRGB"><feGaussianBlur stdDeviation="7"/></filter><filter id="bl9" filterUnits="userSpaceOnUse" x="-200" y="-200" width="2320" height="1680" color-interpolation-filters="sRGB"><feGaussianBlur stdDeviation="9"/></filter><filter id="bl10" filterUnits="userSpaceOnUse" x="-200" y="-200" width="2320" height="1680" color-interpolation-filters="sRGB"><feGaussianBlur stdDeviation="10"/></filter><filter id="bl12" filterUnits="userSpaceOnUse" x="-200" y="-200" width="2320" height="1680" color-interpolation-filters="sRGB"><feGaussianBlur stdDeviation="12"/></filter><filter id="bl14" filterUnits="userSpaceOnUse" x="-200" y="-200" width="2320" height="1680" color-interpolation-filters="sRGB"><feGaussianBlur stdDeviation="14"/></filter><filter id="bl16" filterUnits="userSpaceOnUse" x="-200" y="-200" width="2320" height="1680" color-interpolation-filters="sRGB"><feGaussianBlur stdDeviation="16"/></filter><filter id="bl18" filterUnits="userSpaceOnUse" x="-200" y="-200" width="2320" height="1680" color-interpolation-filters="sRGB"><feGaussianBlur stdDeviation="18"/></filter><filter id="bl20" filterUnits="userSpaceOnUse" x="-200" y="-200" width="2320" height="1680" color-interpolation-filters="sRGB"><feGaussianBlur stdDeviation="20"/></filter><filter id="bl22" filterUnits="userSpaceOnUse" x="-200" y="-200" width="2320" height="1680" color-interpolation-filters="sRGB"><feGaussianBlur stdDeviation="22"/></filter><filter id="bl24" filterUnits="userSpaceOnUse" x="-200" y="-200" width="2320" height="1680" color-interpolation-filters="sRGB"><feGaussianBlur stdDeviation="24"/></filter></defs><rect x="0" y="0" width="1920" height="1280" fill="#1e2e3e"/><use href="#b_A" fill="url(#g_A)"/><g clip-path="url(#cp_A)"><use href="#e_B" fill="none" stroke="#050a12" stroke-opacity="0.14" stroke-width="26" filter="url(#bl16)"/></g><use href="#b_B" fill="url(#g_B)"/><g clip-path="url(#cp_B)"><use href="#e_B" fill="none" stroke="#050a12" stroke-opacity="0.18" stroke-width="18" filter="url(#bl10)"/><path d="M400.0 225.0L470.0 160.0L532.0 100.0L632.0 0.0L680.0 -50.0" fill="none" stroke="#9fc0e6" stroke-opacity="0.1" stroke-width="9" filter="url(#bl7)"/></g><use href="#b_C" fill="url(#g_C)"/><g clip-path="url(#cp_C)"><use href="#e_C" fill="none" stroke="#050a12" stroke-opacity="0.22" stroke-width="26" filter="url(#bl14)"/></g><use href="#b_Dp" fill="url(#g_Dp)"/><use href="#b_ea" fill="#29445f"/><g clip-path="url(#cp_ea)"><use href="#e_ea" fill="none" stroke="#050a12" stroke-opacity="0.3" stroke-width="20" filter="url(#bl10)"/><use href="#e_L1" fill="none" stroke="#050a12" stroke-opacity="0.36" stroke-width="50" filter="url(#bl24)"/></g><use href="#b_L1" fill="#25384b"/><use href="#b_L2" fill="#1a2c3f"/><use href="#b_L3" fill="#26394c"/><use href="#b_L4" fill="#243f5c"/><g clip-path="url(#cp_L4)"><use href="#e_L4" fill="none" stroke="#050a12" stroke-opacity="0.36" stroke-width="20" filter="url(#bl10)"/><use href="#e_L5" fill="none" stroke="#050a12" stroke-opacity="0.16" stroke-width="26" filter="url(#bl16)"/></g><use href="#b_L5" fill="#26394c"/><use href="#b_L6" fill="url(#g_L6)"/><g clip-path="url(#cp_L6)"><use href="#e_L6" fill="none" stroke="#050a12" stroke-opacity="0.32" stroke-width="24" filter="url(#bl12)"/><use href="#e_L7" fill="none" stroke="#050a12" stroke-opacity="0.22" stroke-width="6" filter="url(#bl3)"/></g><use href="#b_L7" fill="#26384b"/><g clip-path="url(#cp_L7)"><use href="#e_M3" fill="none" stroke="#9fc0e6" stroke-opacity="0.03" stroke-width="36" filter="url(#bl18)"/></g><use href="#b_M3" fill="#1d2e40"/><use href="#b_M4" fill="#243649"/><g clip-path="url(#cp_M4)"><use href="#e_M5" fill="none" stroke="#9fc0e6" stroke-opacity="0.1" stroke-width="36" filter="url(#bl18)"/></g><use href="#b_M5" fill="#101a26"/><use href="#b_M6" fill="#243649"/><g clip-path="url(#cp_M6)"><use href="#e_H" fill="none" stroke="#9fc0e6" stroke-opacity="0.12" stroke-width="28" filter="url(#bl14)"/><use href="#e_H" fill="none" stroke="#9fc0e6" stroke-opacity="0.26" stroke-width="4.5" filter="url(#bl2)"/></g><use href="#b_H" fill="url(#g_H)"/><g clip-path="url(#cp_H)"><use href="#e_H" fill="none" stroke="#050a12" stroke-opacity="0.28" stroke-width="18" filter="url(#bl9)"/><use href="#e_H2" fill="none" stroke="#050a12" stroke-opacity="0.22" stroke-width="9" filter="url(#bl4)"/></g><use href="#b_H2" fill="#22354a"/><use href="#b_M9" fill="#24364a"/><g clip-path="url(#cp_M9)"><use href="#e_I" fill="none" stroke="#9fc0e6" stroke-opacity="0.07" stroke-width="44" filter="url(#bl22)"/><use href="#e_I" fill="none" stroke="#9fc0e6" stroke-opacity="0.34" stroke-width="6" filter="url(#bl2_6)"/></g><use href="#b_I" fill="url(#g_I)"/><g clip-path="url(#cp_I)"><use href="#e_I" fill="none" stroke="#050a12" stroke-opacity="0.45" stroke-width="34" filter="url(#bl16)"/><use href="#e_R3" fill="none" stroke="#9fc0e6" stroke-opacity="0.12" stroke-width="40" filter="url(#bl20)"/></g><use href="#b_R3" fill="url(#g_R3)"/><g clip-path="url(#cp_R3)"><use href="#e_R3" fill="none" stroke="#050a12" stroke-opacity="0.3" stroke-width="30" filter="url(#bl14)"/></g><use href="#b_RT" fill="url(#g_RT)"/><g clip-path="url(#cp_RT)"><use href="#e_RB" fill="none" stroke="#9fc0e6" stroke-opacity="0.3" stroke-width="4" filter="url(#bl1_6)"/></g><use href="#b_RB" fill="#1e2d3d"/><g clip-path="url(#cp_RB)"><use href="#e_RB" fill="none" stroke="#050a12" stroke-opacity="0.65" stroke-width="9" filter="url(#bl2_5)"/><use href="#e_RB" fill="none" stroke="#050a12" stroke-opacity="0.28" stroke-width="50" filter="url(#bl22)"/><use href="#e_J" fill="none" stroke="#9fc0e6" stroke-opacity="0.28" stroke-width="5" filter="url(#bl2_2)"/></g><use href="#b_J" fill="#172432"/><g clip-path="url(#cp_J)"><use href="#e_J" fill="none" stroke="#050a12" stroke-opacity="0.25" stroke-width="36" filter="url(#bl18)"/></g><defs><linearGradient id="vgR" x1="0" y1="0" x2="1" y2="0"><stop offset="0" stop-color="#0a1422" stop-opacity="0"/><stop offset="1" stop-color="#0a1422" stop-opacity=".30"/></linearGradient></defs><rect x="1250" y="0" width="670" height="1280" fill="url(#vgR)"/><path d="M-10 476 L135 448 L135 566 L-10 590 Z" fill="#203347"/></svg>
<div class="b" style="left:129.50px;top:129.50px;width:642.00px;height:531.00px;background:#fff;border-radius:8px;box-shadow:0 0 0 .6px rgba(15,25,40,.5);overflow:hidden"></div>
<div class="b" style="left:129.5px;top:614.5px;width:642.0px;height:46.0px;background:#f0f0f0;border-top:1px solid #dfdfdf;border-radius:0 0 8px 8px;box-sizing:border-box"></div>
<svg class="b" style="left:748px;top:139px" width="12" height="12" viewBox="0 0 12 12"><path d="M0.6 0.6 L11.4 11.4 M11.4 0.6 L0.6 11.4" stroke="#1b1b1b" stroke-width="1.15" fill="none"/></svg>
<svg class="b" style="left:137.5px;top:171px" width="15" height="14" viewBox="0 0 15 14"><path d="M14 7 H1.3 M6.6 1.3 L1 7 L6.6 12.7" stroke="#9a9a9a" stroke-width="1.2" fill="none" stroke-linecap="round" stroke-linejoin="round"/></svg>
<svg class="b" style="left:169px;top:179px" width="9" height="8" viewBox="0 0 9 8"><rect x="0.3" y="0.3" width="8.4" height="7.4" rx="1" fill="#eef3fb" stroke="#d5def0" stroke-width=".6"/><path d="M2.3 6.2 C2.6 4.4 3.8 3.4 5.6 3.1 M4.2 2 L6.6 2.2 L6.2 4.6" stroke="#1e86e0" stroke-width="1.1" fill="none"/></svg>
<span class="t" style="left:192.60px;top:169.40px;font-size:13px;letter-spacing:-0.175px;color:#0b0b0b;">Create Shortcut</span>
<span class="t" style="left:171.50px;top:224.50px;font-size:17.6px;letter-spacing:0.108px;color:#0f3aa5;">What item would you like to create a shortcut for?</span>
<span class="t" style="left:171.50px;top:282.60px;font-size:13px;letter-spacing:0.031px;color:#0b0b0b;">This wizard helps you to create shortcuts to local or network programs, files, folders, computers,</span>
<span class="t" style="left:171.50px;top:300.70px;font-size:13px;letter-spacing:-0.084px;color:#0b0b0b;">or Internet addresses.</span>
<span class="t" style="left:171.50px;top:351.00px;font-size:13px;letter-spacing:0.079px;color:#0b0b0b;">Type the location of the item:</span>
<div class="b" style="left:171.25px;top:373.75px;width:425.75px;height:31.45px;background:#fff;border:1px solid #e6e6e6;border-bottom:2px solid #1a6fc9;box-sizing:border-box;border-radius:3px 3px 1px 1px"></div>
<div class="b" style="left:605.50px;top:374.50px;width:89.00px;height:30.20px;background:#fdfdfd;border:1px solid #d6d6d6;box-sizing:border-box;border-radius:4px"></div>
<span class="t" style="left:625.00px;top:380.40px;font-size:13px;letter-spacing:0.000px;color:#0b0b0b;transform:scaleX(0.9228);transform-origin:0 0;">Browse...</span>
<span class="t" style="left:171.50px;top:442.50px;font-size:13px;letter-spacing:-0.065px;color:#0b0b0b;">Click Next to continue.</span>
<div class="b" style="left:600.50px;top:626.25px;width:74.00px;height:23.15px;background:#f7f7f7;border:1px solid #e9e9e9;box-sizing:border-box;border-radius:4px"></div>
<span class="t" style="left:624.30px;top:628.60px;font-size:13px;letter-spacing:-0.343px;color:#9d9d9d;">Next</span>
<div class="b" style="left:685.00px;top:626.00px;width:74.50px;height:23.60px;background:#fdfdfd;border:1px solid #cfcfcf;box-sizing:border-box;border-radius:4px"></div>
<span class="t" style="left:703.80px;top:628.60px;font-size:13px;letter-spacing:0.000px;color:#0b0b0b;transform:scaleX(0.9143);transform-origin:0 0;">Cancel</span>
<div class="b" style="left:1420.00px;top:603.90px;width:372.30px;height:24.10px;background:linear-gradient(90deg,rgba(107,63,212,0),#6b3fd4 55%)"></div>
<div class="b" style="left:817.00px;top:603.60px;width:283.00px;height:2.40px;background:linear-gradient(90deg,#2e9ec6,rgba(46,158,198,0))"></div>
<div class="b" style="left:817.50px;top:604.50px;width:974.00px;height:546.00px;background:#fff;border-radius:8px;box-shadow:0 0 0 .6px rgba(15,25,40,.5)"></div>
<div class="b" style="left:817.50px;top:604.50px;width:974.00px;height:31.20px;background:#eff1f9;border-radius:8px 8px 0 0"></div>
<svg class="b" style="left:825.6px;top:610.6px" width="17.4" height="17.4" viewBox="0 0 17.4 17.4"><rect x="0.20" y="3.20" width="4.6" height="4.6" fill="#29b6f6"/><rect x="5.00" y="3.20" width="4.6" height="4.6" fill="#1fa8ea"/><rect x="0.20" y="8.00" width="4.6" height="4.6" fill="#33c1fa"/><rect x="5.00" y="8.00" width="4.6" height="4.6" fill="#1c9fe2"/><rect x="9.80" y="8.00" width="4.6" height="4.6" fill="#1593d6"/><rect x="0.20" y="12.80" width="4.6" height="4.6" fill="#29b6f6"/><rect x="5.00" y="12.80" width="4.6" height="4.6" fill="#27b2f2"/><rect x="9.80" y="12.80" width="4.6" height="4.6" fill="#1c9fe2"/><rect x="0.2" y="3.2" width="14.2" height="14.2" fill="none" stroke="#0f8fd6" stroke-width=".5"/><rect x="10.9" y="0.9" width="5" height="5" transform="rotate(45 13.4 3.4)" fill="#49c5fb" stroke="#0f8fd6" stroke-width="1"/></svg>
<span class="t" style="left:847.80px;top:610.00px;font-size:13px;letter-spacing:-0.182px;color:#0b0b0b;">Registry Editor</span>
<div class="b" style="left:1658.30px;top:619.00px;width:11.60px;height:1.00px;background:#222"></div>
<svg class="b" style="left:1708px;top:613px" width="13" height="13" viewBox="0 0 13 13"><rect x="1.5" y="1.5" width="10" height="10" rx="1.5" stroke="#1b1b1b" stroke-width="1.1" fill="none"/></svg>
<svg class="b" style="left:1759.8px;top:613.8px" width="12" height="12" viewBox="0 0 12 12"><path d="M0.6 0.6 L11.4 11.4 M11.4 0.6 L0.6 11.4" stroke="#1b1b1b" stroke-width="1.15" fill="none"/></svg>
<span class="t" style="left:826.40px;top:637.70px;font-size:13px;letter-spacing:0.000px;color:#0b0b0b;transform:scaleX(0.8640);transform-origin:0 0;">File</span>
<span class="t" style="left:861.40px;top:637.70px;font-size:13px;letter-spacing:-0.467px;color:#0b0b0b;">Edit</span>
<span class="t" style="left:898.60px;top:637.70px;font-size:13px;letter-spacing:-0.348px;color:#0b0b0b;">View</span>
<span class="t" style="left:941.90px;top:637.70px;font-size:13px;letter-spacing:-0.420px;color:#0b0b0b;">Favorites</span>
<span class="t" style="left:1008.90px;top:637.70px;font-size:13px;letter-spacing:-0.212px;color:#0b0b0b;">Help</span>
<div class="b" style="left:817.50px;top:657.40px;width:974.00px;height:1.20px;background:#ececec"></div>
<span class="t" style="left:823.90px;top:660.40px;font-size:13px;letter-spacing:-0.130px;color:#0b0b0b;">Computer\HKEY_CLASSES_ROOT\Directory\Background\shell\Windows Update\command</span>
<div class="b" style="left:818.60px;top:680.40px;width:437.00px;height:469.60px;background:#fff;border:1px solid #7f8790;border-right-color:#a0a6ae;border-bottom:none;box-sizing:border-box;border-radius:0 0 0 7px"></div>
<div class="b" style="left:1255.60px;top:680.40px;width:4.80px;height:469.60px;background:#f0f0f0"></div>
<div class="b" style="left:1260.40px;top:680.40px;width:530.40px;height:469.60px;background:#fff;border:1px solid #7f8790;border-bottom:none;box-sizing:border-box;border-radius:0 0 7px 0"></div>
<div class="b" style="left:1236.30px;top:681.40px;width:18.30px;height:449.40px;background:#f0f0f0"></div>
<div class="b" style="left:1241.20px;top:828.50px;width:8.10px;height:17.50px;background:#858585"></div>
<div class="b" style="left:819.60px;top:1130.80px;width:435.00px;height:19.20px;background:#f0f0f0;border-radius:0 0 0 7px"></div>
<div class="b" style="left:838.20px;top:1136.30px;width:281.30px;height:7.50px;background:#858585"></div>
<div class="b" style="left:1261.40px;top:1130.80px;width:528.40px;height:19.20px;background:#f0f0f0;border-radius:0 0 7px 0"></div>
<div class="b" style="left:1280.60px;top:1136.30px;width:368.20px;height:7.50px;background:#858585"></div>
<svg width="0" height="0" style="position:absolute"><defs><linearGradient id="fg" x1="0" y1="0" x2="0" y2="1"><stop offset="0" stop-color="#ffe9a0"/><stop offset=".5" stop-color="#ffd767"/><stop offset="1" stop-color="#fbc235"/></linearGradient></defs></svg>
<div class="b" style="left:848.30px;top:681.40px;height:449.40px;width:0;border-left:1px dotted #a8a8a8"></div>
<div class="b" style="left:865.20px;top:681.40px;height:449.40px;width:0;border-left:1px dotted #a8a8a8"></div>
<div class="b" style="left:882.60px;top:814.45px;height:189.38px;width:0;border-left:1px dotted #a8a8a8"></div>
<div class="b" style="left:900.00px;top:834.82px;height:95.88px;width:0;border-left:1px dotted #a8a8a8"></div>
<div class="b" style="left:917.40px;top:847.20px;height:42.75px;width:0;border-left:1px dotted #a8a8a8"></div>
<svg class="b" style="left:874.40px;top:685.80px" width="16.6" height="12.4" viewBox="0 0 16.6 12.4"><path d="M0.3 1.6 Q0.3 0.3 1.6 0.3 H5.4 L7.2 1.9 H15 Q16.3 1.9 16.3 3.2 V4 H0.3 Z" fill="#e9a825"/><path d="M0.3 3.0 H16.3 V11 Q16.3 12.1 15.2 12.1 H1.4 Q0.3 12.1 0.3 11 Z" fill="url(#fg)"/></svg>
<div class="b" style="left:865.90px;top:692.20px;width:8.00px;height:0;border-top:1px dotted #a8a8a8"></div>
<span class="t" style="left:895.60px;top:682.70px;font-size:13px;letter-spacing:-0.041px;color:#0b0b0b;">DiagnosticLog</span>
<svg class="b" style="left:874.40px;top:706.17px" width="16.6" height="12.4" viewBox="0 0 16.6 12.4"><path d="M0.3 1.6 Q0.3 0.3 1.6 0.3 H5.4 L7.2 1.9 H15 Q16.3 1.9 16.3 3.2 V4 H0.3 Z" fill="#e9a825"/><path d="M0.3 3.0 H16.3 V11 Q16.3 12.1 15.2 12.1 H1.4 Q0.3 12.1 0.3 11 Z" fill="url(#fg)"/></svg>
<div class="b" style="left:865.90px;top:712.57px;width:8.00px;height:0;border-top:1px dotted #a8a8a8"></div>
<span class="t" style="left:895.60px;top:703.07px;font-size:13px;letter-spacing:-0.279px;color:#0b0b0b;">dial</span>
<svg class="b" style="left:874.40px;top:726.55px" width="16.6" height="12.4" viewBox="0 0 16.6 12.4"><path d="M0.3 1.6 Q0.3 0.3 1.6 0.3 H5.4 L7.2 1.9 H15 Q16.3 1.9 16.3 3.2 V4 H0.3 Z" fill="#e9a825"/><path d="M0.3 3.0 H16.3 V11 Q16.3 12.1 15.2 12.1 H1.4 Q0.3 12.1 0.3 11 Z" fill="url(#fg)"/></svg>
<svg class="b" style="left:862.00px;top:727.45px" width="7" height="11" viewBox="0 0 7 11"><path d="M1 0.8 L5.8 5.5 L1 10.2" stroke="#6a6a6a" stroke-width="1.05" fill="none"/></svg>
<span class="t" style="left:895.60px;top:723.45px;font-size:13px;letter-spacing:-0.209px;color:#0b0b0b;">DirectDraw</span>
<svg class="b" style="left:874.40px;top:746.92px" width="16.6" height="12.4" viewBox="0 0 16.6 12.4"><path d="M0.3 1.6 Q0.3 0.3 1.6 0.3 H5.4 L7.2 1.9 H15 Q16.3 1.9 16.3 3.2 V4 H0.3 Z" fill="#e9a825"/><path d="M0.3 3.0 H16.3 V11 Q16.3 12.1 15.2 12.1 H1.4 Q0.3 12.1 0.3 11 Z" fill="url(#fg)"/></svg>
<svg class="b" style="left:862.00px;top:747.82px" width="7" height="11" viewBox="0 0 7 11"><path d="M1 0.8 L5.8 5.5 L1 10.2" stroke="#6a6a6a" stroke-width="1.05" fill="none"/></svg>
<span class="t" style="left:895.60px;top:743.82px;font-size:13px;letter-spacing:-0.212px;color:#0b0b0b;">DirectDraw7</span>
<svg class="b" style="left:874.40px;top:767.30px" width="16.6" height="12.4" viewBox="0 0 16.6 12.4"><path d="M0.3 1.6 Q0.3 0.3 1.6 0.3 H5.4 L7.2 1.9 H15 Q16.3 1.9 16.3 3.2 V4 H0.3 Z" fill="#e9a825"/><path d="M0.3 3.0 H16.3 V11 Q16.3 12.1 15.2 12.1 H1.4 Q0.3 12.1 0.3 11 Z" fill="url(#fg)"/></svg>
<svg class="b" style="left:862.00px;top:768.20px" width="7" height="11" viewBox="0 0 7 11"><path d="M1 0.8 L5.8 5.5 L1 10.2" stroke="#6a6a6a" stroke-width="1.05" fill="none"/></svg>
<span class="t" style="left:895.60px;top:764.20px;font-size:13px;letter-spacing:-0.142px;color:#0b0b0b;">DirectDrawClipper</span>
<svg class="b" style="left:874.40px;top:787.67px" width="16.6" height="12.4" viewBox="0 0 16.6 12.4"><path d="M0.3 1.6 Q0.3 0.3 1.6 0.3 H5.4 L7.2 1.9 H15 Q16.3 1.9 16.3 3.2 V4 H0.3 Z" fill="#e9a825"/><path d="M0.3 3.0 H16.3 V11 Q16.3 12.1 15.2 12.1 H1.4 Q0.3 12.1 0.3 11 Z" fill="url(#fg)"/></svg>
<svg class="b" style="left:860.00px;top:790.77px" width="11" height="7" viewBox="0 0 11 7"><path d="M0.8 1 L5.5 5.8 L10.2 1" stroke="#2a2a2a" stroke-width="1.2" fill="none"/></svg>
<span class="t" style="left:895.60px;top:784.57px;font-size:13px;letter-spacing:-0.076px;color:#0b0b0b;">Directory</span>
<svg class="b" style="left:891.75px;top:808.05px" width="16.6" height="12.4" viewBox="0 0 16.6 12.4"><path d="M0.3 1.6 Q0.3 0.3 1.6 0.3 H5.4 L7.2 1.9 H15 Q16.3 1.9 16.3 3.2 V4 H0.3 Z" fill="#e9a825"/><path d="M0.3 3.0 H16.3 V11 Q16.3 12.1 15.2 12.1 H1.4 Q0.3 12.1 0.3 11 Z" fill="url(#fg)"/></svg>
<svg class="b" style="left:877.35px;top:811.15px" width="11" height="7" viewBox="0 0 11 7"><path d="M0.8 1 L5.5 5.8 L10.2 1" stroke="#2a2a2a" stroke-width="1.2" fill="none"/></svg>
<span class="t" style="left:912.95px;top:804.95px;font-size:13px;letter-spacing:-0.115px;color:#0b0b0b;">Background</span>
<svg class="b" style="left:909.10px;top:828.42px" width="16.6" height="12.4" viewBox="0 0 16.6 12.4"><path d="M0.3 1.6 Q0.3 0.3 1.6 0.3 H5.4 L7.2 1.9 H15 Q16.3 1.9 16.3 3.2 V4 H0.3 Z" fill="#e9a825"/><path d="M0.3 3.0 H16.3 V11 Q16.3 12.1 15.2 12.1 H1.4 Q0.3 12.1 0.3 11 Z" fill="url(#fg)"/></svg>
<svg class="b" style="left:894.70px;top:831.52px" width="11" height="7" viewBox="0 0 11 7"><path d="M0.8 1 L5.5 5.8 L10.2 1" stroke="#2a2a2a" stroke-width="1.2" fill="none"/></svg>
<span class="t" style="left:930.30px;top:825.32px;font-size:13px;letter-spacing:0.000px;color:#0b0b0b;transform:scaleX(0.9238);transform-origin:0 0;">shell</span>
<svg class="b" style="left:926.45px;top:848.80px" width="16.6" height="12.4" viewBox="0 0 16.6 12.4"><path d="M0.3 1.6 Q0.3 0.3 1.6 0.3 H5.4 L7.2 1.9 H15 Q16.3 1.9 16.3 3.2 V4 H0.3 Z" fill="#e9a825"/><path d="M0.3 3.0 H16.3 V11 Q16.3 12.1 15.2 12.1 H1.4 Q0.3 12.1 0.3 11 Z" fill="url(#fg)"/></svg>
<svg class="b" style="left:914.05px;top:849.70px" width="7" height="11" viewBox="0 0 7 11"><path d="M1 0.8 L5.8 5.5 L1 10.2" stroke="#6a6a6a" stroke-width="1.05" fill="none"/></svg>
<span class="t" style="left:947.65px;top:845.70px;font-size:13px;letter-spacing:0.145px;color:#0b0b0b;">cmd</span>
<svg class="b" style="left:926.45px;top:869.17px" width="16.6" height="12.4" viewBox="0 0 16.6 12.4"><path d="M0.3 1.6 Q0.3 0.3 1.6 0.3 H5.4 L7.2 1.9 H15 Q16.3 1.9 16.3 3.2 V4 H0.3 Z" fill="#e9a825"/><path d="M0.3 3.0 H16.3 V11 Q16.3 12.1 15.2 12.1 H1.4 Q0.3 12.1 0.3 11 Z" fill="url(#fg)"/></svg>
<svg class="b" style="left:914.05px;top:870.07px" width="7" height="11" viewBox="0 0 7 11"><path d="M1 0.8 L5.8 5.5 L1 10.2" stroke="#6a6a6a" stroke-width="1.05" fill="none"/></svg>
<span class="t" style="left:947.65px;top:866.07px;font-size:13px;letter-spacing:-0.415px;color:#0b0b0b;">Powershell</span>
<svg class="b" style="left:926.45px;top:889.55px" width="16.6" height="12.4" viewBox="0 0 16.6 12.4"><path d="M0.3 1.6 Q0.3 0.3 1.6 0.3 H5.4 L7.2 1.9 H15 Q16.3 1.9 16.3 3.2 V4 H0.3 Z" fill="#e9a825"/><path d="M0.3 3.0 H16.3 V11 Q16.3 12.1 15.2 12.1 H1.4 Q0.3 12.1 0.3 11 Z" fill="url(#fg)"/></svg>
<svg class="b" style="left:912.05px;top:892.65px" width="11" height="7" viewBox="0 0 11 7"><path d="M0.8 1 L5.5 5.8 L10.2 1" stroke="#2a2a2a" stroke-width="1.2" fill="none"/></svg>
<span class="t" style="left:947.65px;top:886.45px;font-size:13px;letter-spacing:0.083px;color:#0b0b0b;">Windows Update</span>
<div class="b" style="left:942.50px;top:906.30px;width:83.80px;height:19.30px;background:#d9d9d9"></div>
<svg class="b" style="left:943.80px;top:909.92px" width="16.6" height="12.4" viewBox="0 0 16.6 12.4"><path d="M0.3 1.6 Q0.3 0.3 1.6 0.3 H5.4 L7.2 1.9 H15 Q16.3 1.9 16.3 3.2 V4 H0.3 Z" fill="#e9a825"/><path d="M0.3 3.0 H16.3 V11 Q16.3 12.1 15.2 12.1 H1.4 Q0.3 12.1 0.3 11 Z" fill="url(#fg)"/></svg>
<div class="b" style="left:934.80px;top:906.32px;height:10.00px;width:0;border-left:1px dotted #a8a8a8"></div>
<div class="b" style="left:934.80px;top:916.32px;width:8.00px;height:0;border-top:1px dotted #a8a8a8"></div>
<span class="t" style="left:965.00px;top:906.82px;font-size:13px;letter-spacing:0.203px;color:#0b0b0b;">command</span>
<svg class="b" style="left:909.10px;top:930.30px" width="16.6" height="12.4" viewBox="0 0 16.6 12.4"><path d="M0.3 1.6 Q0.3 0.3 1.6 0.3 H5.4 L7.2 1.9 H15 Q16.3 1.9 16.3 3.2 V4 H0.3 Z" fill="#e9a825"/><path d="M0.3 3.0 H16.3 V11 Q16.3 12.1 15.2 12.1 H1.4 Q0.3 12.1 0.3 11 Z" fill="url(#fg)"/></svg>
<svg class="b" style="left:896.70px;top:931.20px" width="7" height="11" viewBox="0 0 7 11"><path d="M1 0.8 L5.8 5.5 L1 10.2" stroke="#6a6a6a" stroke-width="1.05" fill="none"/></svg>
<span class="t" style="left:930.30px;top:927.20px;font-size:13px;letter-spacing:-0.461px;color:#0b0b0b;">shellex</span>
<svg class="b" style="left:891.75px;top:950.67px" width="16.6" height="12.4" viewBox="0 0 16.6 12.4"><path d="M0.3 1.6 Q0.3 0.3 1.6 0.3 H5.4 L7.2 1.9 H15 Q16.3 1.9 16.3 3.2 V4 H0.3 Z" fill="#e9a825"/><path d="M0.3 3.0 H16.3 V11 Q16.3 12.1 15.2 12.1 H1.4 Q0.3 12.1 0.3 11 Z" fill="url(#fg)"/></svg>
<div class="b" style="left:883.25px;top:957.07px;width:8.00px;height:0;border-top:1px dotted #a8a8a8"></div>
<span class="t" style="left:912.95px;top:947.57px;font-size:13px;letter-spacing:-0.041px;color:#0b0b0b;">DefaultIcon</span>
<svg class="b" style="left:891.75px;top:971.05px" width="16.6" height="12.4" viewBox="0 0 16.6 12.4"><path d="M0.3 1.6 Q0.3 0.3 1.6 0.3 H5.4 L7.2 1.9 H15 Q16.3 1.9 16.3 3.2 V4 H0.3 Z" fill="#e9a825"/><path d="M0.3 3.0 H16.3 V11 Q16.3 12.1 15.2 12.1 H1.4 Q0.3 12.1 0.3 11 Z" fill="url(#fg)"/></svg>
<svg class="b" style="left:879.35px;top:971.95px" width="7" height="11" viewBox="0 0 7 11"><path d="M1 0.8 L5.8 5.5 L1 10.2" stroke="#6a6a6a" stroke-width="1.05" fill="none"/></svg>
<span class="t" style="left:912.95px;top:967.95px;font-size:13px;letter-spacing:-0.422px;color:#0b0b0b;">shell</span>
<svg class="b" style="left:891.75px;top:991.42px" width="16.6" height="12.4" viewBox="0 0 16.6 12.4"><path d="M0.3 1.6 Q0.3 0.3 1.6 0.3 H5.4 L7.2 1.9 H15 Q16.3 1.9 16.3 3.2 V4 H0.3 Z" fill="#e9a825"/><path d="M0.3 3.0 H16.3 V11 Q16.3 12.1 15.2 12.1 H1.4 Q0.3 12.1 0.3 11 Z" fill="url(#fg)"/></svg>
<svg class="b" style="left:879.35px;top:992.32px" width="7" height="11" viewBox="0 0 7 11"><path d="M1 0.8 L5.8 5.5 L1 10.2" stroke="#6a6a6a" stroke-width="1.05" fill="none"/></svg>
<span class="t" style="left:912.95px;top:988.32px;font-size:13px;letter-spacing:0.000px;color:#0b0b0b;transform:scaleX(0.9279);transform-origin:0 0;">shellex</span>
<svg class="b" style="left:874.40px;top:1011.80px" width="16.6" height="12.4" viewBox="0 0 16.6 12.4"><path d="M0.3 1.6 Q0.3 0.3 1.6 0.3 H5.4 L7.2 1.9 H15 Q16.3 1.9 16.3 3.2 V4 H0.3 Z" fill="#e9a825"/><path d="M0.3 3.0 H16.3 V11 Q16.3 12.1 15.2 12.1 H1.4 Q0.3 12.1 0.3 11 Z" fill="url(#fg)"/></svg>
<svg class="b" style="left:862.00px;top:1012.70px" width="7" height="11" viewBox="0 0 7 11"><path d="M1 0.8 L5.8 5.5 L1 10.2" stroke="#6a6a6a" stroke-width="1.05" fill="none"/></svg>
<span class="t" style="left:895.60px;top:1008.70px;font-size:13px;letter-spacing:-0.174px;color:#0b0b0b;">DirectShow</span>
<svg class="b" style="left:874.40px;top:1032.17px" width="16.6" height="12.4" viewBox="0 0 16.6 12.4"><path d="M0.3 1.6 Q0.3 0.3 1.6 0.3 H5.4 L7.2 1.9 H15 Q16.3 1.9 16.3 3.2 V4 H0.3 Z" fill="#e9a825"/><path d="M0.3 3.0 H16.3 V11 Q16.3 12.1 15.2 12.1 H1.4 Q0.3 12.1 0.3 11 Z" fill="url(#fg)"/></svg>
<svg class="b" style="left:862.00px;top:1033.08px" width="7" height="11" viewBox="0 0 7 11"><path d="M1 0.8 L5.8 5.5 L1 10.2" stroke="#6a6a6a" stroke-width="1.05" fill="none"/></svg>
<span class="t" style="left:895.60px;top:1029.07px;font-size:13px;letter-spacing:-0.417px;color:#0b0b0b;">DirectXFile</span>
<svg class="b" style="left:874.40px;top:1052.55px" width="16.6" height="12.4" viewBox="0 0 16.6 12.4"><path d="M0.3 1.6 Q0.3 0.3 1.6 0.3 H5.4 L7.2 1.9 H15 Q16.3 1.9 16.3 3.2 V4 H0.3 Z" fill="#e9a825"/><path d="M0.3 3.0 H16.3 V11 Q16.3 12.1 15.2 12.1 H1.4 Q0.3 12.1 0.3 11 Z" fill="url(#fg)"/></svg>
<svg class="b" style="left:862.00px;top:1053.45px" width="7" height="11" viewBox="0 0 7 11"><path d="M1 0.8 L5.8 5.5 L1 10.2" stroke="#6a6a6a" stroke-width="1.05" fill="none"/></svg>
<span class="t" style="left:895.60px;top:1049.45px;font-size:13px;letter-spacing:-0.111px;color:#0b0b0b;">Discord</span>
<svg class="b" style="left:874.40px;top:1072.92px" width="16.6" height="12.4" viewBox="0 0 16.6 12.4"><path d="M0.3 1.6 Q0.3 0.3 1.6 0.3 H5.4 L7.2 1.9 H15 Q16.3 1.9 16.3 3.2 V4 H0.3 Z" fill="#e9a825"/><path d="M0.3 3.0 H16.3 V11 Q16.3 12.1 15.2 12.1 H1.4 Q0.3 12.1 0.3 11 Z" fill="url(#fg)"/></svg>
<svg class="b" style="left:862.00px;top:1073.83px" width="7" height="11" viewBox="0 0 7 11"><path d="M1 0.8 L5.8 5.5 L1 10.2" stroke="#6a6a6a" stroke-width="1.05" fill="none"/></svg>
<span class="t" style="left:895.60px;top:1069.82px;font-size:13px;letter-spacing:0.073px;color:#0b0b0b;">discord-455712169795780630</span>
<svg class="b" style="left:874.40px;top:1093.30px" width="16.6" height="12.4" viewBox="0 0 16.6 12.4"><path d="M0.3 1.6 Q0.3 0.3 1.6 0.3 H5.4 L7.2 1.9 H15 Q16.3 1.9 16.3 3.2 V4 H0.3 Z" fill="#e9a825"/><path d="M0.3 3.0 H16.3 V11 Q16.3 12.1 15.2 12.1 H1.4 Q0.3 12.1 0.3 11 Z" fill="url(#fg)"/></svg>
<svg class="b" style="left:862.00px;top:1094.20px" width="7" height="11" viewBox="0 0 7 11"><path d="M1 0.8 L5.8 5.5 L1 10.2" stroke="#6a6a6a" stroke-width="1.05" fill="none"/></svg>
<span class="t" style="left:895.60px;top:1090.20px;font-size:13px;letter-spacing:0.073px;color:#0b0b0b;">discord-475006012840083466</span>
<svg class="b" style="left:874.40px;top:1113.67px" width="16.6" height="12.4" viewBox="0 0 16.6 12.4"><path d="M0.3 1.6 Q0.3 0.3 1.6 0.3 H5.4 L7.2 1.9 H15 Q16.3 1.9 16.3 3.2 V4 H0.3 Z" fill="#e9a825"/><path d="M0.3 3.0 H16.3 V11 Q16.3 12.1 15.2 12.1 H1.4 Q0.3 12.1 0.3 11 Z" fill="url(#fg)"/></svg>
<div class="b" style="left:865.90px;top:1120.08px;width:8.00px;height:0;border-top:1px dotted #a8a8a8"></div>
<span class="t" style="left:895.60px;top:1110.57px;font-size:13px;letter-spacing:-0.077px;color:#0b0b0b;">DiskManagement.Connection</span>
<span class="t" style="left:1266.40px;top:684.10px;font-size:13px;letter-spacing:-0.360px;color:#0b0b0b;">Name</span>
<span class="t" style="left:1522.90px;top:684.10px;font-size:13px;letter-spacing:-0.562px;color:#0b0b0b;">Type</span>
<span class="t" style="left:1654.20px;top:684.10px;font-size:13px;letter-spacing:-0.553px;color:#0b0b0b;">Data</span>
<div class="b" style="left:1518.00px;top:683.00px;width:1.00px;height:21.00px;background:#e5e5e5"></div>
<div class="b" style="left:1648.60px;top:683.00px;width:1.00px;height:21.00px;background:#e5e5e5"></div>
<div class="b" style="left:1282.00px;top:704.80px;width:54.30px;height:20.00px;background:#0a64d8;outline:1px dotted #f7c58a;outline-offset:-1px"></div>
<span class="t" style="left:1284.00px;top:705.80px;font-size:13px;letter-spacing:-0.231px;color:#fff;">(Default)</span>
<span class="t" style="left:1523.00px;top:705.80px;font-size:13px;letter-spacing:0.000px;color:#0b0b0b;transform:scaleX(0.8075);transform-origin:0 0;">REG_SZ</span>
<div class="b" style="left:1654px;top:700px;width:135.8px;height:30px;overflow:hidden">
<span class="t" style="left:0;top:5.50px;font-size:13px;letter-spacing:-0.003px;color:#0b0b0b">C:\Windows\explorer.exe ms-settings:windowsupdate</span></div>
<svg class="b" style="left:1264.6px;top:705.4px" width="17.6" height="18" viewBox="0 0 17.6 18"><path d="M1 1.5 H16.6 V12.6 Q13 11.6 10.6 14 Q8 16.6 4.6 14.6 Q2.6 13.5 1 14.2 Z" fill="#8fb6e6" stroke="#5f8fd0" stroke-width=".8"/><text x="8.6" y="10.6" font-family="Liberation Sans, sans-serif" font-weight="bold" font-size="9.4" text-anchor="middle" fill="#8a5a6a">ab</text></svg>
</body></html>
